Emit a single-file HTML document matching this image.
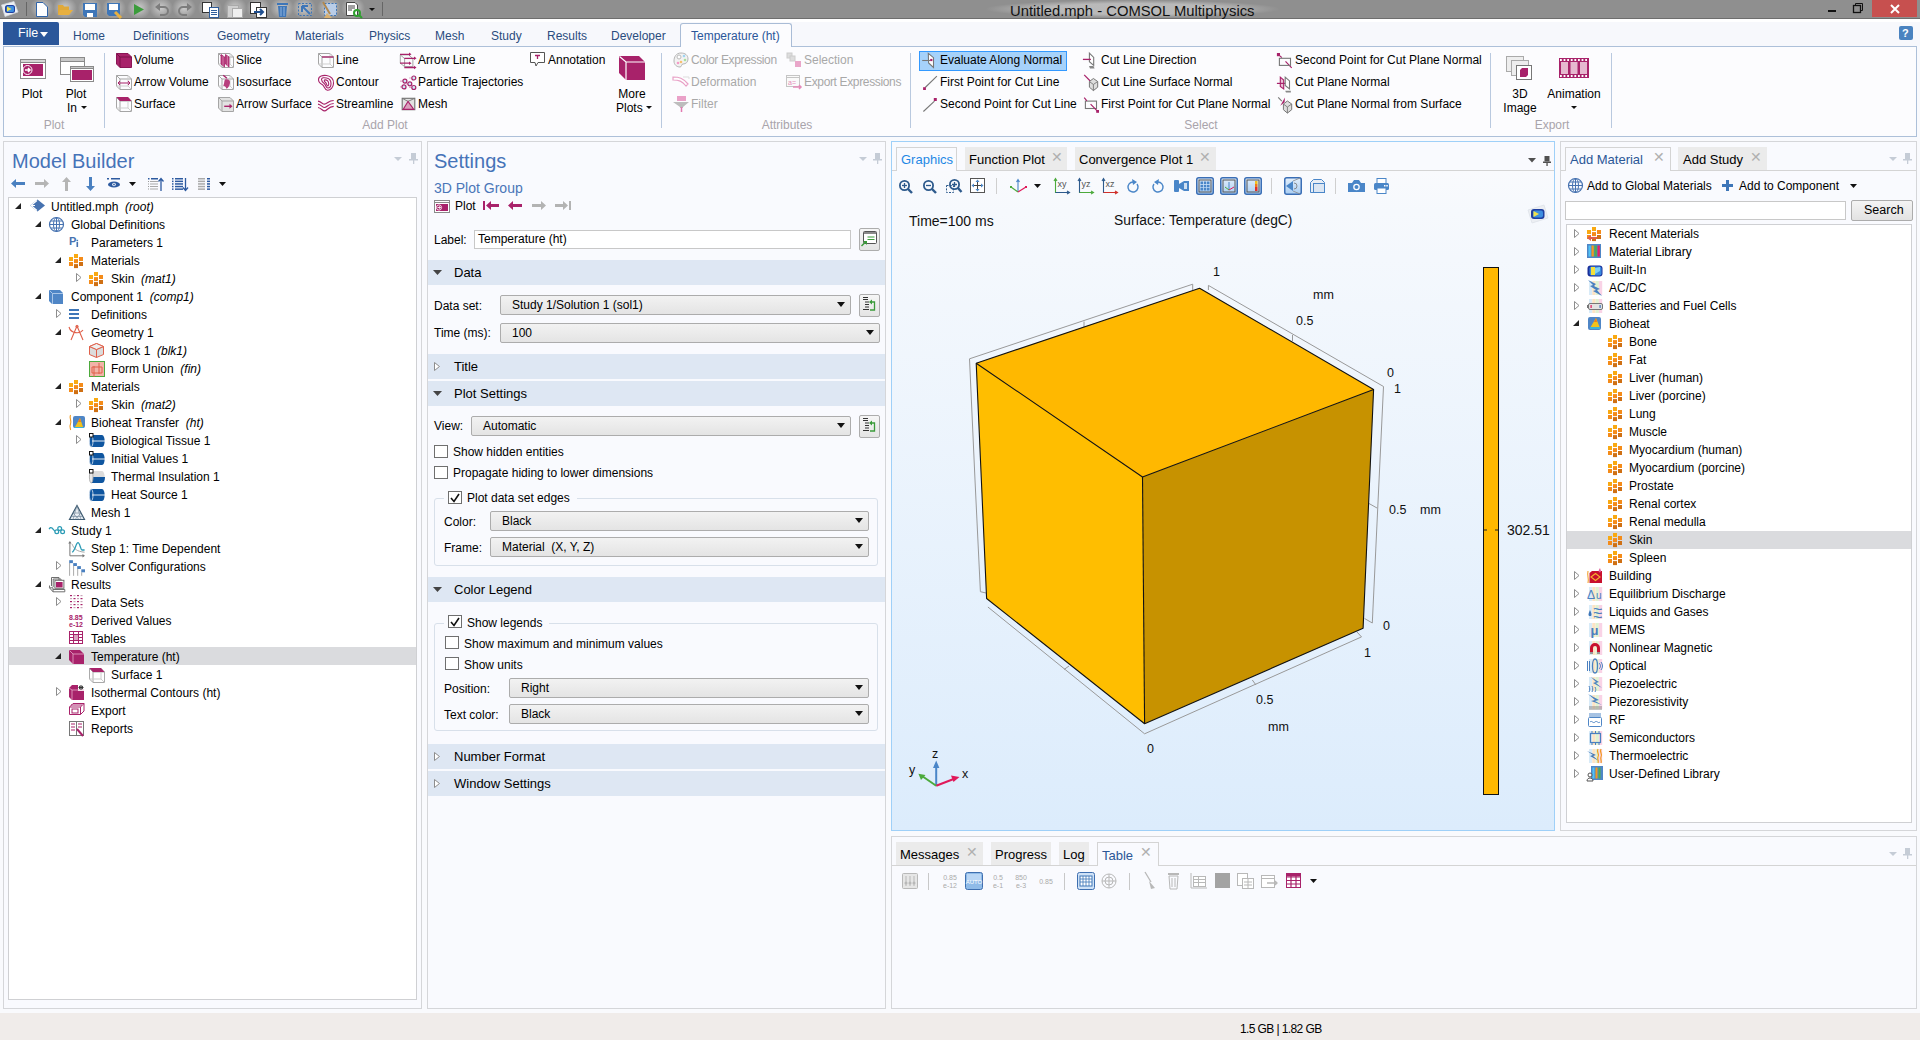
<!DOCTYPE html>
<html><head><meta charset="utf-8">
<style>
*{margin:0;padding:0;box-sizing:border-box}
html,body{width:1920px;height:1040px;overflow:hidden;background:#f9fafd;font-family:"Liberation Sans",sans-serif;font-size:12px;color:#000}
.a{position:absolute}
.t{position:absolute;white-space:nowrap;line-height:14px}
svg{position:absolute;overflow:visible}
.panel{position:absolute;background:#f9fafe;border:1px solid #d5d6d9}
.rtab{color:#2a4c7e}
.grp{color:#a9a4ab}
.dis{color:#a8a8a8}
.cb{background:linear-gradient(#f2f2f2,#e4e4e4);border:1px solid #acacac;border-radius:2px}
.gl{font-size:12.5px;color:#111}
</style></head><body>
<div class="a" style="left:0;top:0;width:1920px;height:18px;background:#8f8f8f"></div>
<div class="a" style="left:0;top:18px;width:1920px;height:1px;background:#6e6e6e"></div>
<div class="a" style="left:985px;top:0;width:295px;height:18px;background:radial-gradient(closest-side,rgba(190,190,190,0.9) 60%,rgba(143,143,143,0) 100%)"></div>
<div class="t" style="left:1010px;top:3px;font-size:14.8px;line-height:16px;color:#111">Untitled.mph - COMSOL Multiphysics</div>
<div class="a" style="left:1872px;top:0;width:45px;height:17px;background:#c7504f"></div>
<svg style="left:1888px;top:4px" width="14" height="10" viewBox="0 0 14 10"><path d="M3,1 L11,9 M11,1 L3,9" stroke="#fff" stroke-width="2"/></svg>
<div class="a" style="left:1828px;top:10px;width:8px;height:2px;background:#111"></div>
<svg style="left:1852px;top:2px" width="12" height="12" viewBox="0 0 12 12"><rect x="1.5" y="3.5" width="7" height="7" fill="none" stroke="#111" stroke-width="1.3"/><path d="M3.5,3.5 V1.5 H10.5 V8.5 H8.5" fill="none" stroke="#111" stroke-width="1"/></svg>
<div class="a" style="left:30px;top:-3px;width:24px;height:22px;background:radial-gradient(closest-side,rgba(215,215,215,0.85),rgba(143,143,143,0))"></div>
<div class="a" style="left:53px;top:-3px;width:24px;height:22px;background:radial-gradient(closest-side,rgba(215,215,215,0.85),rgba(143,143,143,0))"></div>
<div class="a" style="left:78px;top:-3px;width:24px;height:22px;background:radial-gradient(closest-side,rgba(215,215,215,0.85),rgba(143,143,143,0))"></div>
<div class="a" style="left:102px;top:-3px;width:24px;height:22px;background:radial-gradient(closest-side,rgba(215,215,215,0.85),rgba(143,143,143,0))"></div>
<div class="a" style="left:127px;top:-3px;width:24px;height:22px;background:radial-gradient(closest-side,rgba(215,215,215,0.85),rgba(143,143,143,0))"></div>
<div class="a" style="left:149px;top:-3px;width:24px;height:22px;background:radial-gradient(closest-side,rgba(215,215,215,0.85),rgba(143,143,143,0))"></div>
<div class="a" style="left:172px;top:-3px;width:24px;height:22px;background:radial-gradient(closest-side,rgba(215,215,215,0.85),rgba(143,143,143,0))"></div>
<div class="a" style="left:198px;top:-3px;width:24px;height:22px;background:radial-gradient(closest-side,rgba(215,215,215,0.85),rgba(143,143,143,0))"></div>
<div class="a" style="left:223px;top:-3px;width:24px;height:22px;background:radial-gradient(closest-side,rgba(215,215,215,0.85),rgba(143,143,143,0))"></div>
<div class="a" style="left:246px;top:-3px;width:24px;height:22px;background:radial-gradient(closest-side,rgba(215,215,215,0.85),rgba(143,143,143,0))"></div>
<div class="a" style="left:270px;top:-3px;width:24px;height:22px;background:radial-gradient(closest-side,rgba(215,215,215,0.85),rgba(143,143,143,0))"></div>
<div class="a" style="left:292px;top:-3px;width:24px;height:22px;background:radial-gradient(closest-side,rgba(215,215,215,0.85),rgba(143,143,143,0))"></div>
<div class="a" style="left:317px;top:-3px;width:24px;height:22px;background:radial-gradient(closest-side,rgba(215,215,215,0.85),rgba(143,143,143,0))"></div>
<div class="a" style="left:341px;top:-3px;width:24px;height:22px;background:radial-gradient(closest-side,rgba(215,215,215,0.85),rgba(143,143,143,0))"></div>
<svg style="left:1px;top:1px" width="18" height="16" viewBox="0 0 18 16"><path d="M0.5,4 L13,0.5 L17,11 L4,15.5z" fill="#eceff3" stroke="#d0d4da" stroke-width="0.8"/><rect x="4" y="4" width="10" height="8" rx="2.5" fill="#1f3fa0"/><rect x="5.5" y="5" width="7.5" height="6" rx="1.5" fill="#3d8ee0"/><path d="M6,5.5 L10.5,8 L6,10.5z" fill="#f2e14a"/></svg>
<div class="a" style="left:26px;top:2px;width:1px;height:14px;background:#666"></div>
<svg style="left:36px;top:2px" width="12" height="15" viewBox="0 0 12 15"><path d="M0.5,0.5 H7 L11.5,5 V14.5 H0.5z" fill="#fff" stroke="#2f63a8"/></svg>
<svg style="left:57px;top:4px" width="17" height="12" viewBox="0 0 17 12"><path d="M1,1 H6 L7,2.5 H12 V6 H4 L1,11z" fill="#e0a93a"/><path d="M3,6 H16 L12,11 H1z" fill="#e8b040"/></svg>
<svg style="left:83px;top:3px" width="14" height="14" viewBox="0 0 14 14"><path d="M0,0 H14 V14 H2 L0,12z" fill="#3e76b8"/><rect x="2" y="1" width="10" height="6" fill="#fff"/><rect x="4" y="10" width="6" height="4" fill="#fff"/></svg>
<svg style="left:107px;top:3px" width="15" height="15" viewBox="0 0 15 15"><path d="M0,0 H13 V13 H2 L0,11z" fill="#3e76b8"/><rect x="2" y="1" width="9" height="6" fill="#fff"/><path d="M8,9 L14,15" stroke="#e8b040" stroke-width="3"/></svg>
<svg style="left:134px;top:4px" width="10" height="11" viewBox="0 0 10 11"><path d="M0,0 L10,5.5 L0,11z" fill="#3b9c3b"/></svg>
<svg style="left:155px;top:3px" width="14" height="13" viewBox="0 0 14 13"><path d="M4,4 H9 A4,4 0 0 1 9,12 H5" fill="none" stroke="#7d7d7d" stroke-width="2"/><path d="M0,4 L5,0 V8z" fill="#7d7d7d"/></svg>
<svg style="left:178px;top:3px" width="14" height="13" viewBox="0 0 14 13"><path d="M10,4 H5 A4,4 0 0 0 5,12 H9" fill="none" stroke="#7d7d7d" stroke-width="2"/><path d="M14,4 L9,0 V8z" fill="#7d7d7d"/></svg>
<svg style="left:202px;top:2px" width="17" height="16" viewBox="0 0 17 16"><rect x="0.5" y="0.5" width="9" height="10" fill="#fff" stroke="#333"/><rect x="7.5" y="5.5" width="9" height="10" fill="#fff" stroke="#2f5d9a"/><path d="M9,8.5 H15 M9,10.5 H15 M9,12.5 H15" stroke="#2f5d9a"/></svg>
<svg style="left:227px;top:2px" width="16" height="16" viewBox="0 0 16 16"><rect x="0.5" y="3.5" width="11" height="12" fill="#cfcfcf" stroke="#aaa"/><rect x="5.5" y="6.5" width="10" height="9" fill="#eee" stroke="#aaa"/></svg>
<svg style="left:250px;top:2px" width="17" height="16" viewBox="0 0 17 16"><rect x="0.5" y="0.5" width="10" height="11" fill="#fff" stroke="#333"/><rect x="6.5" y="5.5" width="10" height="10" fill="#fff" stroke="#333"/><path d="M4,10 H13 M10,7 L13,10 L10,13" stroke="#1f4f90" stroke-width="2" fill="none"/></svg>
<svg style="left:277px;top:2px" width="11" height="15" viewBox="0 0 11 15"><rect x="0" y="1" width="11" height="2" fill="#3e76b8"/><path d="M1,4 H10 L9,15 H2z" fill="#3e76b8"/><path d="M4,5 V14 M7,5 V14" stroke="#8fb4e0"/></svg>
<svg style="left:298px;top:3px" width="14" height="13" viewBox="0 0 14 13"><rect x="0.5" y="0.5" width="13" height="12" fill="none" stroke="#3e76b8" stroke-dasharray="2,1.5"/><path d="M4,3 L12,11 M4,3 L4,9 M4,3 L10,3" stroke="#3e76b8" stroke-width="2"/></svg>
<svg style="left:322px;top:2px" width="15" height="16" viewBox="0 0 15 16"><rect x="2.5" y="1.5" width="12" height="12" fill="#b9cde8" stroke="#3e76b8" stroke-dasharray="2,1.5"/><path d="M1,0 L8,12" stroke="#b08850" stroke-width="2"/><path d="M5,11 L10,16 L2,16z" fill="#d8b070"/></svg>
<svg style="left:346px;top:2px" width="16" height="16" viewBox="0 0 16 16"><path d="M0.5,0.5 H9 L11.5,3 V13.5 H0.5z" fill="#fff" stroke="#444"/><path d="M2,4 H9 M2,6 H9 M2,8 H6" stroke="#444"/><circle cx="11" cy="11" r="3" fill="none" stroke="#2fa02f" stroke-width="2"/><path d="M13,13 L16,16" stroke="#2fa02f" stroke-width="2"/></svg>
<svg style="left:369px;top:8px" width="6" height="4" viewBox="0 0 6 4"><path d="M0,0 H6 L3,3z" fill="#111"/></svg>
<div class="a" style="left:382px;top:2px;width:1px;height:14px;background:#666"></div>
<div class="a" style="left:0;top:19px;width:1920px;height:3px;background:#fff"></div>
<div class="a" style="left:0;top:22px;width:1920px;height:24px;background:#f7f8fc"></div>
<div class="a" style="left:3px;top:22px;width:56px;height:23px;background:#2b579a;border-top-right-radius:2px"></div>
<div class="t" style="left:18px;top:26px;font-size:12.5px;color:#fff">File</div>
<svg style="left:40px;top:32px" width="8" height="5" viewBox="0 0 8 5"><path d="M0,0 H8 L4,5z" fill="#fff"/></svg>
<div class="t rtab" style="left:73px;top:29px;font-size:12px;">Home</div>
<div class="t rtab" style="left:133px;top:29px;font-size:12px;">Definitions</div>
<div class="t rtab" style="left:217px;top:29px;font-size:12px;">Geometry</div>
<div class="t rtab" style="left:295px;top:29px;font-size:12px;">Materials</div>
<div class="t rtab" style="left:369px;top:29px;font-size:12px;">Physics</div>
<div class="t rtab" style="left:435px;top:29px;font-size:12px;">Mesh</div>
<div class="t rtab" style="left:491px;top:29px;font-size:12px;">Study</div>
<div class="t rtab" style="left:547px;top:29px;font-size:12px;">Results</div>
<div class="t rtab" style="left:611px;top:29px;font-size:12px;">Developer</div>
<div class="a" style="left:680px;top:23px;width:112px;height:24px;background:#fcfcfe;border:1px solid #a9bcd6;border-bottom:none;border-radius:3px 3px 0 0;z-index:2"></div>
<div class="t " style="left:691px;top:29px;font-size:12px;color:#2b579a;z-index:3">Temperature (ht)</div>
<div class="a" style="left:1899px;top:26px;width:14px;height:14px;background:#4a83c0;border-radius:2px"></div>
<div class="t" style="left:1902px;top:26px;font-size:11px;font-weight:bold;color:#fff">?</div>
<div class="a" style="left:3px;top:46px;width:1914px;height:91px;background:#fcfcfe;border:1px solid #adc0d9"></div>
<div class="a" style="left:104px;top:53px;width:1px;height:75px;background:#b9c9df"></div>
<div class="a" style="left:661px;top:53px;width:1px;height:75px;background:#b9c9df"></div>
<div class="a" style="left:910px;top:53px;width:1px;height:75px;background:#b9c9df"></div>
<div class="a" style="left:1490px;top:53px;width:1px;height:75px;background:#b9c9df"></div>
<div class="a" style="left:1611px;top:53px;width:1px;height:75px;background:#b9c9df"></div>
<div class="t grp" style="left:-6px;width:120px;text-align:center;top:118px;font-size:12px">Plot</div>
<div class="t grp" style="left:325px;width:120px;text-align:center;top:118px;font-size:12px">Add Plot</div>
<div class="t grp" style="left:727px;width:120px;text-align:center;top:118px;font-size:12px">Attributes</div>
<div class="t grp" style="left:1141px;width:120px;text-align:center;top:118px;font-size:12px">Select</div>
<div class="t grp" style="left:1492px;width:120px;text-align:center;top:118px;font-size:12px">Export</div>
<svg style="left:20px;top:59px" width="26" height="20" viewBox="0 0 26 20"><rect x="0.5" y="0.5" width="25" height="19" fill="#fff" stroke="#8a8a8a"/><rect x="0.5" y="0.5" width="25" height="3" fill="#d6d6d6" stroke="#8a8a8a"/><rect x="3" y="5" width="20" height="12" fill="#a8226a"/><circle cx="7.5" cy="11" r="4.5" fill="#a8226a" stroke="#fff" stroke-width="1"/><path d="M5,11 H10 M8,9 L10,11 L8,13" stroke="#fff" stroke-width="1.5" fill="none"/></svg>
<div class="t" style="left:2px;width:60px;text-align:center;top:87px">Plot</div>
<svg style="left:60px;top:57px" width="34" height="25" viewBox="0 0 34 25"><rect x="0.5" y="0.5" width="24" height="17" fill="#fff" stroke="#8a8a8a"/><rect x="0.5" y="0.5" width="24" height="4" fill="#c8c8c8" stroke="#8a8a8a"/><rect x="10.5" y="9.5" width="23" height="15" fill="#fff" stroke="#8a8a8a"/><rect x="10.5" y="9.5" width="23" height="2" fill="#c8c8c8" stroke="#8a8a8a"/><rect x="12" y="13" width="20" height="10" fill="#a8226a"/></svg>
<div class="t" style="left:46px;width:60px;text-align:center;top:87px">Plot</div>
<div class="t" style="left:67px;top:101px">In</div>
<svg style="left:81px;top:106px" width="6" height="4" viewBox="0 0 6 4"><path d="M0,0 H6 L3,3z" fill="#111"/></svg>
<svg style="left:116px;top:52px" width="16" height="16" viewBox="0 0 16 16"><path d="M0.5,1.5 H12 L15.5,5 V15.5 H4 L0.5,12z" fill="#a8226a" stroke="#8a1555"/><path d="M0.5,1.5 L4,5 H15.5 M4,5 V15.5" stroke="#7a1048" fill="none"/></svg>
<div class="t " style="left:134px;top:53px;font-size:12px;">Volume</div>
<svg style="left:116px;top:74px" width="16" height="16" viewBox="0 0 16 16"><g fill="none" stroke="#a5a5a5" stroke-width="1"><path d="M0.5,1.5 H12 L15.5,5 V15.5 H4 L0.5,12z M0.5,1.5 L4,5 H15.5 M4,5 V15.5"/><path d="M12,1.5 V12 H0.5 M12,12 L15.5,15.5" stroke="#cfcfcf"/></g><path d="M2,9 H14 M4,7 L2,9 L4,11 M12,7 L14,9 L12,11" stroke="#a8226a" fill="none"/></svg>
<div class="t " style="left:134px;top:75px;font-size:12px;">Arrow Volume</div>
<svg style="left:116px;top:96px" width="16" height="16" viewBox="0 0 16 16"><g fill="none" stroke="#a5a5a5" stroke-width="1"><path d="M0.5,1.5 H12 L15.5,5 V15.5 H4 L0.5,12z M0.5,1.5 L4,5 H15.5 M4,5 V15.5"/><path d="M12,1.5 V12 H0.5 M12,12 L15.5,15.5" stroke="#cfcfcf"/></g><path d="M0.5,1 H12 L15.5,5 H4z" fill="#a8226a"/></svg>
<div class="t " style="left:134px;top:97px;font-size:12px;">Surface</div>
<svg style="left:218px;top:52px" width="16" height="16" viewBox="0 0 16 16"><g fill="none" stroke="#a5a5a5" stroke-width="1"><path d="M0.5,1.5 H12 L15.5,5 V15.5 H4 L0.5,12z M0.5,1.5 L4,5 H15.5 M4,5 V15.5"/><path d="M12,1.5 V12 H0.5 M12,12 L15.5,15.5" stroke="#cfcfcf"/></g><path d="M3,2.5 L6.5,5 V15 L3,12z M7.5,2.5 L11,5 V15 L7.5,12z" fill="#b8407e" stroke="#a8226a" stroke-width="0.8"/><path d="M5,4 V14 M9.5,4 V14" stroke="#d98ab3" stroke-width="0.7"/></svg>
<div class="t " style="left:236px;top:53px;font-size:12px;">Slice</div>
<svg style="left:218px;top:74px" width="16" height="16" viewBox="0 0 16 16"><g fill="none" stroke="#a5a5a5" stroke-width="1"><path d="M0.5,1.5 H12 L15.5,5 V15.5 H4 L0.5,12z M0.5,1.5 L4,5 H15.5 M4,5 V15.5"/><path d="M12,1.5 V12 H0.5 M12,12 L15.5,15.5" stroke="#cfcfcf"/></g><path d="M5.2,1.2 L8.9,4.3" stroke="#a8226a" stroke-width="1.4"/><path d="M7,5.5 C10,4.5 12.5,6 12,9 C11.5,12 10,14 8.5,14.8 C8,12.5 6.5,12 5.2,11.5 C6.5,10 6,7 7,5.5z" fill="#b8407e"/></svg>
<div class="t " style="left:236px;top:75px;font-size:12px;">Isosurface</div>
<svg style="left:218px;top:96px" width="16" height="16" viewBox="0 0 16 16"><path d="M0.5,1.5 H12 L15.5,5 V15.5 H4 L0.5,12z" fill="#e2e2e2" stroke="#a5a5a5"/><path d="M0.5,1.5 L4,5 H15.5 M4,5 V15.5" stroke="#a5a5a5" fill="none"/><path d="M6.2,10.3 H12.5" stroke="#a8226a" stroke-width="1.4"/><path d="M11.5,7.8 L14.5,10.3 L11.5,12.8z" fill="#a8226a"/></svg>
<div class="t " style="left:236px;top:97px;font-size:12px;">Arrow Surface</div>
<svg style="left:318px;top:52px" width="16" height="16" viewBox="0 0 16 16"><g fill="none" stroke="#a5a5a5" stroke-width="1"><path d="M0.5,1.5 H12 L15.5,5 V15.5 H4 L0.5,12z M0.5,1.5 L4,5 H15.5 M4,5 V15.5"/><path d="M12,1.5 V12 H0.5 M12,12 L15.5,15.5" stroke="#cfcfcf"/></g><path d="M4,5 H15.5" stroke="#a8226a" stroke-width="1.3"/></svg>
<div class="t " style="left:336px;top:53px;font-size:12px;">Line</div>
<svg style="left:318px;top:74px" width="16" height="16" viewBox="0 0 16 16"><g fill="none" stroke="#a8226a" stroke-width="1.1"><path d="M0.5,5.5 C0.5,2 5,1 8.5,1.5 C13,2.2 15.7,5 15.5,9.5 C15.3,13.5 12.5,16.5 9.5,16.3 C6.5,16 6.5,12 4.5,10.8 C2.5,9.8 0.5,8.8 0.5,5.5z"/><path d="M3.5,5.5 C3.5,3.5 6,3.5 8.5,4 C11.5,4.6 13,6.5 13,9.5 C13,12.5 11.5,14 9.8,14 C8,14 8,11 6.5,9.8 C5,8.6 3.5,7.5 3.5,5.5z"/><path d="M6.5,6 C8.5,5.5 10.5,6.8 10.7,9.5 C10.9,11.5 10,12 9.5,11.8 C8.5,11.5 8.8,9.5 7.5,8.5 C6.5,7.8 6,6.5 6.5,6z"/></g></svg>
<div class="t " style="left:336px;top:75px;font-size:12px;">Contour</div>
<svg style="left:318px;top:96px" width="16" height="16" viewBox="0 0 16 16"><g fill="none" stroke="#a8226a" stroke-width="1.2"><path d="M0,5.1 C3,5.5 4.5,8.2 6.5,8.2 C9,8.2 10.5,4.5 15.7,4.5"/><path d="M0,8.2 C3,8.6 4.5,11.5 6.5,11.5 C9,11.5 10.5,7.5 15.7,7.5"/><path d="M0,11.5 C3,11.9 4.5,14.9 6.5,14.9 C9,14.9 10.5,10.3 15.7,10.3"/></g></svg>
<div class="t " style="left:336px;top:97px;font-size:12px;">Streamline</div>
<svg style="left:400px;top:52px" width="16" height="16" viewBox="0 0 16 16"><g fill="none" stroke="#a5a5a5"><path d="M0.3,2.9 H8.6 L12.9,6.6 V14.6 H4.6 L0.3,11.2z M0.3,2.9 L4.6,6.6 H12.9 M4.6,6.6 V14.6"/></g><g stroke="#a8226a" stroke-width="1.3"><path d="M0,2.3 H9.5 M4.3,6.3 H14.5 M0,11.2 H9.5 M4.3,15.5 H14.5"/></g><g fill="#a8226a"><path d="M9,0.5 L11.5,2.3 L9,4.1z M14,4.5 L16.5,6.3 L14,8.1z M9,9.4 L11.5,11.2 L9,13z M14,13.7 L16.5,15.5 L14,17.3z"/></g></svg>
<div class="t " style="left:418px;top:53px;font-size:12px;">Arrow Line</div>
<svg style="left:400px;top:74px" width="16" height="16" viewBox="0 0 16 16"><g stroke="#e3a9c7" stroke-width="1.2"><path d="M9,4 H11 M0,7.1 H2.5 M6,9.8 H7.5 M0,12.9 H1.7 M9,13.5 H11"/></g><g fill="#cfe8f5" stroke="#a8226a" stroke-width="1.2"><circle cx="13.8" cy="4" r="2"/><circle cx="4.9" cy="7.1" r="2"/><circle cx="9.8" cy="9.8" r="2"/><circle cx="4" cy="12.9" r="2"/><circle cx="13.8" cy="13.5" r="2"/></g></svg>
<div class="t " style="left:418px;top:75px;font-size:12px;">Particle Trajectories</div>
<svg style="left:400px;top:96px" width="16" height="16" viewBox="0 0 16 16"><rect x="2.2" y="2.3" width="12.6" height="11.4" fill="#e2e2e2" stroke="#6f6f6f" stroke-width="1.1"/><path d="M2.2,2.3 L8,5.4 L14.8,2.3" stroke="#777" fill="none" stroke-width="0.9"/><path d="M8,5.4 L13.8,13.4 H3.1z" fill="#d9a0bd" stroke="#a8226a" stroke-width="1.1"/></svg>
<div class="t " style="left:418px;top:97px;font-size:12px;">Mesh</div>
<svg style="left:530px;top:52px" width="16" height="16" viewBox="0 0 16 16"><path d="M0.5,0.5 H14.5 V10.5 H8 L6,14 L5,10.5 H0.5z" fill="#fff" stroke="#555"/><path d="M5,3.5 H10 M7.5,3.5 V7" stroke="#a8226a" stroke-width="1.3"/></svg>
<div class="t " style="left:548px;top:53px;font-size:12px;">Annotation</div>
<svg style="left:619px;top:56px" width="28" height="25" viewBox="0 0 28 25"><path d="M0,0 H20 L26,6 V24 H7 L0,17z" fill="#a8226a"/><path d="M0.5,0.5 L7,6 H26 M7,6 V24" stroke="#fff" stroke-width="1.2" fill="none"/></svg>
<div class="t" style="left:602px;width:60px;text-align:center;top:87px">More</div>
<div class="t" style="left:616px;top:101px">Plots</div>
<svg style="left:646px;top:106px" width="6" height="4" viewBox="0 0 6 4"><path d="M0,0 H6 L3,3z" fill="#111"/></svg>
<svg style="left:673px;top:52px" width="16" height="16" viewBox="0 0 16 16"><path d="M8,1 C3,1 1,5 1,9 C1,13 4,15 7,15 C9,15 8,12 10,12 C13,12 15,10 15,7 C15,3 12,1 8,1z" fill="#f2f2f2" stroke="#b5b5b5"/><circle cx="5" cy="11" r="1.3" fill="#f59ac8"/><circle cx="8" cy="10" r="1.3" fill="#f7c070"/><circle cx="12" cy="8" r="1.3" fill="#a8e09a"/><circle cx="11" cy="4" r="1.3" fill="#9fd4f2"/><circle cx="6" cy="5" r="2" fill="#fff" stroke="#bbb"/></svg>
<div class="t dis" style="left:691px;top:53px;font-size:12px;letter-spacing:-0.35px">Color Expression</div>
<svg style="left:673px;top:74px" width="16" height="16" viewBox="0 0 16 16"><path d="M0,3 C6,3 10,4 15,10 L13,12 C9,7 6,6 0,6z" fill="#fff" stroke="#e8a0c6" stroke-width="1.2"/><path d="M10,3 H16 V5" stroke="#ddd" fill="none"/></svg>
<div class="t dis" style="left:691px;top:75px;font-size:12px;">Deformation</div>
<svg style="left:673px;top:96px" width="16" height="16" viewBox="0 0 16 16"><rect x="4" y="0" width="9" height="5" fill="#eaa1c8"/><path d="M0,6 H16 L10,11 V12 H7 V11z" fill="#bdbdbd"/><path d="M8.5,11 V16" stroke="#e37ab0" stroke-width="1.5"/></svg>
<div class="t dis" style="left:691px;top:97px;font-size:12px;">Filter</div>
<svg style="left:786px;top:52px" width="16" height="16" viewBox="0 0 16 16"><rect x="1" y="1" width="5" height="5" fill="#ddd" stroke="#ccc"/><rect x="4" y="4" width="5" height="5" fill="#ddd" stroke="#ccc"/><rect x="9" y="9" width="6" height="6" fill="#e9a6c9"/></svg>
<div class="t dis" style="left:804px;top:53px;font-size:12px;">Selection</div>
<svg style="left:786px;top:74px" width="16" height="16" viewBox="0 0 16 16"><rect x="0.5" y="1.5" width="13" height="11" fill="#fafafa" stroke="#c5c5c5"/><path d="M0.5,3.5 H13.5" stroke="#c5c5c5"/><text x="2" y="11" font-size="7" fill="#e48ab8" font-family="Liberation Sans">a=</text><path d="M7,13 H15 M13,11 L15,13 L13,15" stroke="#e48ab8" stroke-width="1.5" fill="none"/></svg>
<div class="t dis" style="left:804px;top:75px;font-size:12px;letter-spacing:-0.35px">Export Expressions</div>
<div class="a" style="left:919px;top:51px;width:148px;height:20px;background:#a6d2fa;border:1px solid #3399ff"></div>
<svg style="left:922px;top:52px" width="16" height="16" viewBox="0 0 16 16"><path d="M6.3,1.4 L11.5,5.7 V15.5 L6.6,10.9z" fill="#fff" stroke="#777" stroke-width="1.1"/><path d="M0.2,8.5 H8.5" stroke="#777" stroke-width="1.1"/><rect x="8.2" y="6.9" width="2.2" height="2.2" fill="#a8226a"/></svg>
<div class="t " style="left:940px;top:53px;font-size:12px;">Evaluate Along Normal</div>
<svg style="left:922px;top:74px" width="16" height="16" viewBox="0 0 16 16"><path d="M14.9,2.2 L3.2,13.5" stroke="#777" stroke-width="1.1"/><rect x="1.1" y="13.2" width="2.8" height="2.8" fill="#a8226a"/></svg>
<div class="t " style="left:940px;top:75px;font-size:12px;">First Point for Cut Line</div>
<svg style="left:922px;top:96px" width="16" height="16" viewBox="0 0 16 16"><path d="M1.4,15.5 L12.5,5.1" stroke="#777" stroke-width="1.1"/><rect x="11.8" y="2" width="3" height="3" fill="#a8226a"/></svg>
<div class="t " style="left:940px;top:97px;font-size:12px;">Second Point for Cut Line</div>
<svg style="left:1083px;top:52px" width="16" height="16" viewBox="0 0 16 16"><path d="M6.4,1.1 L10.7,5.4 V13.4 L6.4,9.7z" fill="#fff" stroke="#777" stroke-width="1.1"/><path d="M-0.1,7.4 H7.9" stroke="#a8226a" stroke-width="1.3"/><path d="M6,14 H10.5 L11.6,16.5 H7z" fill="#888"/></svg>
<div class="t " style="left:1101px;top:53px;font-size:12px;">Cut Line Direction</div>
<svg style="left:1083px;top:74px" width="16" height="16" viewBox="0 0 16 16"><path d="M1.2,0.9 L8.2,8" stroke="#a8226a" stroke-width="1.2"/><path d="M10.4,4.5 L14.7,7.5 V13.2 L10.4,16.6 L6.4,13.2 V7.5z" fill="#dedede" stroke="#777" stroke-width="1"/><path d="M6.4,7.5 L10.4,10.5 L14.7,7.5 M10.4,10.5 V16.6" stroke="#777" stroke-width="0.9" fill="none"/></svg>
<div class="t " style="left:1101px;top:75px;font-size:12px;">Cut Line Surface Normal</div>
<svg style="left:1083px;top:96px" width="16" height="16" viewBox="0 0 16 16"><rect x="2.4" y="5.1" width="11.1" height="7.4" fill="none" stroke="#777" stroke-width="1.1"/><path d="M1.2,1.7 L3.9,4.8 M7.6,8.2 L14.4,15.2" stroke="#a8226a" stroke-width="1.2"/><rect x="13.2" y="14" width="2.8" height="2.8" fill="#a8226a"/></svg>
<div class="t " style="left:1101px;top:97px;font-size:12px;">First Point for Cut Plane Normal</div>
<svg style="left:1277px;top:52px" width="16" height="16" viewBox="0 0 16 16"><rect x="-0.1" y="1" width="3.1" height="3.2" fill="#a8226a"/><path d="M3,3.8 L4.8,5.7 M8.5,9.4 L14.7,15.8" stroke="#a8226a" stroke-width="1.2"/><rect x="2.4" y="6.3" width="11.1" height="7.1" fill="none" stroke="#777" stroke-width="1.1"/></svg>
<div class="t " style="left:1295px;top:53px;font-size:12px;">Second Point for Cut Plane Normal</div>
<svg style="left:1277px;top:74px" width="16" height="16" viewBox="0 0 16 16"><path d="M3.3,3.2 L6.7,6 V14.9 L3.3,12.5z" fill="#ebc1d6" stroke="#a8226a" stroke-width="1.1"/><path d="M-0.1,9.4 H9.8" stroke="#a8226a" stroke-width="1.2"/><path d="M8.2,3.2 L12.5,6.9 V14.9 L8.2,11.5z" fill="#fff" stroke="#777" stroke-width="1.1"/><path d="M8.2,16.8 H13.8 V18.6 H9z" fill="#888"/></svg>
<div class="t " style="left:1295px;top:75px;font-size:12px;">Cut Plane Normal</div>
<svg style="left:1277px;top:96px" width="16" height="16" viewBox="0 0 16 16"><path d="M1.2,1.4 L4.8,5.1" stroke="#777" stroke-width="1.1"/><path d="M3.3,9.7 L7.9,1.4 L7.6,6.3z" fill="#a8226a"/><path d="M10.4,5.0 L14.7,8.0 V13.7 L10.4,17.1 L6.4,13.7 V8.0z" fill="#dedede" stroke="#777" stroke-width="1"/><path d="M6.4,8.0 L10.4,11.0 L14.7,8.0 M10.4,11.0 V17.1" stroke="#777" stroke-width="0.9" fill="none"/></svg>
<div class="t " style="left:1295px;top:97px;font-size:12px;">Cut Plane Normal from Surface</div>
<svg style="left:1506px;top:56px" width="31" height="25" viewBox="0 0 31 25"><rect x="0.5" y="0.5" width="17" height="15" fill="#eee" stroke="#aaa"/><rect x="5.5" y="4.5" width="17" height="15" fill="#eee" stroke="#aaa"/><rect x="10.5" y="9.5" width="15" height="14" fill="#fff" stroke="#777"/><path d="M14,14 L16,12 H22 V19 L20,21 H14z" fill="#a8226a"/></svg>
<div class="t" style="left:1490px;width:60px;text-align:center;top:87px">3D</div>
<div class="t" style="left:1490px;width:60px;text-align:center;top:101px">Image</div>
<svg style="left:1559px;top:58px" width="30" height="20" viewBox="0 0 30 20"><rect x="0" y="0" width="30" height="20" fill="#a8226a"/><rect x="2" y="4" width="7" height="12" fill="#e6b8cf"/><rect x="11.5" y="4" width="7" height="12" fill="#e6b8cf"/><rect x="21" y="4" width="7" height="12" fill="#e6b8cf"/><rect x="1.0" y="1" width="1.8" height="2" fill="#fff"/><rect x="1.0" y="17" width="1.8" height="2" fill="#fff"/><rect x="4.6" y="1" width="1.8" height="2" fill="#fff"/><rect x="4.6" y="17" width="1.8" height="2" fill="#fff"/><rect x="8.2" y="1" width="1.8" height="2" fill="#fff"/><rect x="8.2" y="17" width="1.8" height="2" fill="#fff"/><rect x="11.8" y="1" width="1.8" height="2" fill="#fff"/><rect x="11.8" y="17" width="1.8" height="2" fill="#fff"/><rect x="15.4" y="1" width="1.8" height="2" fill="#fff"/><rect x="15.4" y="17" width="1.8" height="2" fill="#fff"/><rect x="19.0" y="1" width="1.8" height="2" fill="#fff"/><rect x="19.0" y="17" width="1.8" height="2" fill="#fff"/><rect x="22.6" y="1" width="1.8" height="2" fill="#fff"/><rect x="22.6" y="17" width="1.8" height="2" fill="#fff"/><rect x="26.2" y="1" width="1.8" height="2" fill="#fff"/><rect x="26.2" y="17" width="1.8" height="2" fill="#fff"/></svg>
<div class="t" style="left:1524px;width:100px;text-align:center;top:87px">Animation</div>
<svg style="left:1571px;top:106px" width="6" height="4" viewBox="0 0 6 4"><path d="M0,0 H6 L3,3z" fill="#111"/></svg>
<div class="panel" style="left:3px;top:141px;width:419px;height:868px"></div>
<div class="panel" style="left:427px;top:141px;width:459px;height:868px"></div>
<div class="panel" style="left:891px;top:141px;width:664px;height:690px;border-color:#9fd0f8"></div>
<div class="panel" style="left:1560px;top:141px;width:357px;height:690px"></div>
<div class="panel" style="left:891px;top:836px;width:1026px;height:173px"></div>
<div class="a" style="left:0;top:1013px;width:1920px;height:27px;background:#f0ecea"></div>
<!-- GRAPHICS PANEL -->
<div class="a" style="left:892px;top:171px;width:662px;height:659px;background:linear-gradient(#f9fafd 0px,#f6f9fd 40px,#dcecfc 659px)"></div>
<div class="a" style="left:892px;top:170px;width:662px;height:1px;background:#d4d4d4"></div>
<div class="a" style="left:896px;top:147px;width:61px;height:24px;border:1px solid #d4d4d4;border-bottom:none;background:#f9fafe"></div>
<div class="a" style="left:965px;top:147px;width:102px;height:23px;background:#ebebeb"></div>
<div class="a" style="left:1075px;top:147px;width:141px;height:23px;background:#ebebeb"></div>
<div class="t" style="left:901px;top:153px;font-size:13px;color:#1e88e5">Graphics</div>
<div class="t" style="left:969px;top:153px;font-size:13px">Function Plot</div>
<div class="t" style="left:1051px;top:150px;font-size:14px;color:#b0b0b0">&#x2715;</div>
<div class="t" style="left:1079px;top:153px;font-size:13px">Convergence Plot 1</div>
<div class="t" style="left:1199px;top:150px;font-size:14px;color:#b0b0b0">&#x2715;</div>
<svg class="a" style="left:0;top:0" width="1920" height="1040">
 <g fill="none" stroke="#999" stroke-width="1">
  <polyline points="975,480 969.5,358.8 1192.7,284.2 1192.7,290"/>
  <line x1="1084" y1="321.5" x2="1084" y2="327"/>
  <polyline points="1208.4,290 1208.4,285.4 1383.5,386.5 1372.3,623 1364.6,618.5"/>
  <line x1="1292.5" y1="335" x2="1292.5" y2="341"/>
  <line x1="1369" y1="503.5" x2="1377" y2="508"/>
  <polyline points="975,480 980.4,591.7 986,593"/>
  <polyline points="987.9,607 1144.6,733.8 1361.5,636.9 1357,632"/>
  <line x1="1064" y1="669.5" x2="1069" y2="666"/>
  <line x1="1252.3" y1="680" x2="1256" y2="685"/>
 </g>
 <polygon points="1199.6,288.2 1373.6,389.5 1142.5,477 976.2,363.2" fill="#ffb800"/>
 <polygon points="976.2,363.2 1142.5,477 1144.6,723.7 986.6,598.5" fill="#ffbe00"/>
 <polygon points="1142.5,477 1373.6,389.5 1363.1,628.3 1144.6,723.7" fill="#c79200"/>
 <g fill="none" stroke="#111" stroke-width="1.1" stroke-linejoin="round">
  <polygon points="1199.6,288.2 1373.6,389.5 1363.1,628.3 1144.6,723.7 986.6,598.5 976.2,363.2"/>
  <polyline points="976.2,363.2 1142.5,477 1373.6,389.5"/>
  <line x1="1142.5" y1="477" x2="1144.6" y2="723.7"/>
 </g>
 <rect x="1483.5" y="267.5" width="15" height="527" fill="#ffb800" stroke="#111" stroke-width="1"/>
 <line x1="1484" y1="530" x2="1487" y2="530" stroke="#222"/>
 <line x1="1495" y1="530" x2="1498" y2="530" stroke="#222"/>
 <g stroke-width="2" fill="none">
  <line x1="936.2" y1="785.8" x2="936.2" y2="765" stroke="#4a86c8"/>
  <line x1="936.2" y1="785.8" x2="955" y2="778.5" stroke="#e0195a"/>
  <line x1="936.2" y1="785.8" x2="922" y2="776" stroke="#4caa3c"/>
 </g>
 <polygon points="936.2,760.5 933,768 939.4,768" fill="#4a86c8"/>
 <polygon points="959.5,777 951,775.5 953.5,782" fill="#e0195a"/>
 <polygon points="918.4,773.8 921,780 925.5,775" fill="#4caa3c"/>
</svg>
<div class="t" style="left:909px;top:214px;font-size:14px;color:#111">Time=100 ms</div>
<div class="t" style="left:1114px;top:214px;font-size:13.8px;color:#111">Surface: Temperature (degC)</div>
<div class="t gl" style="left:1213px;top:265px">1</div>
<div class="t gl" style="left:1313px;top:288px">mm</div>
<div class="t gl" style="left:1296px;top:314px">0.5</div>
<div class="t gl" style="left:1387px;top:366px">0</div>
<div class="t gl" style="left:1394px;top:382px">1</div>
<div class="t gl" style="left:1389px;top:503px">0.5</div>
<div class="t gl" style="left:1420px;top:503px">mm</div>
<div class="t gl" style="left:1383px;top:619px">0</div>
<div class="t gl" style="left:1364px;top:646px">1</div>
<div class="t gl" style="left:1256px;top:693px">0.5</div>
<div class="t gl" style="left:1268px;top:720px">mm</div>
<div class="t gl" style="left:1147px;top:742px">0</div>
<div class="t" style="left:1507px;top:523px;font-size:14px;color:#111">302.51</div>
<div class="t gl" style="left:932px;top:747px">z</div>
<div class="t gl" style="left:909px;top:763px">y</div>
<div class="t gl" style="left:962px;top:767px">x</div>

<svg style="left:899px;top:180px" width="14" height="14" viewBox="0 0 14 14"><circle cx="5.5" cy="5.5" r="4.6" fill="none" stroke="#2d5a8c" stroke-width="1.8"/><path d="M9,9 L13,13" stroke="#2d5a8c" stroke-width="2.4"/><path d="M3,5.5 H8" stroke="#2d5a8c" stroke-width="1.3"/><path d="M5.5,3 V8" stroke="#2d5a8c" stroke-width="1.3"/></svg>
<svg style="left:923px;top:180px" width="14" height="14" viewBox="0 0 14 14"><circle cx="5.5" cy="5.5" r="4.6" fill="none" stroke="#2d5a8c" stroke-width="1.8"/><path d="M9,9 L13,13" stroke="#2d5a8c" stroke-width="2.4"/><path d="M3,5.5 H8" stroke="#2d5a8c" stroke-width="1.3"/></svg>
<svg style="left:946px;top:179px" width="16" height="15" viewBox="0 0 16 15"><rect x="0.5" y="6.5" width="7" height="7" fill="none" stroke="#2d5a8c" stroke-dasharray="2,1.3"/><circle cx="8.5" cy="5.5" r="4.6" fill="none" stroke="#2d5a8c" stroke-width="1.8"/><path d="M12,9 L15.5,13" stroke="#2d5a8c" stroke-width="2.4"/><path d="M6,5.5 H11 M8.5,3 V8" stroke="#2d5a8c" stroke-width="1.3"/></svg>
<svg style="left:970px;top:178px" width="15" height="15" viewBox="0 0 15 15"><rect x="0.5" y="0.5" width="14" height="14" fill="#fff" stroke="#555"/><path d="M7.5,4 V11 M4,7.5 H11" stroke="#444"/><path d="M7.5,1.5 L5.5,4 H9.5z M7.5,13.5 L5.5,11 H9.5z M1.5,7.5 L4,5.5 V9.5z M13.5,7.5 L11,5.5 V9.5z" fill="#4a86c8"/></svg>
<div class="a" style="left:996px;top:178px;width:1px;height:16px;background:#cfcfcf"></div>
<div class="a" style="left:1271px;top:178px;width:1px;height:16px;background:#cfcfcf"></div>
<div class="a" style="left:1335px;top:178px;width:1px;height:16px;background:#cfcfcf"></div>
<svg style="left:1010px;top:179px" width="17" height="14" viewBox="0 0 17 14"><path d="M8,13 V1 M6.5,3 L8,0.5 L9.5,3" stroke="#4a86c8" stroke-width="1.1" fill="none"/><path d="M8,13 L1,8" stroke="#4caa3c" stroke-width="1.2"/><path d="M8,13 L16,8" stroke="#e0195a" stroke-width="1.2"/><rect x="0" y="7" width="2" height="2" fill="#4caa3c"/><rect x="15" y="7" width="2" height="2" fill="#e0195a"/></svg>
<svg style="left:1034px;top:184px" width="7" height="4" viewBox="0 0 7 4"><path d="M0,0 H7 L3.5,4z" fill="#111"/></svg>
<svg style="left:1054px;top:178px" width="16" height="16" viewBox="0 0 16 16"><path d="M1.5,15 V1 M0,3 L1.5,0.5 L3,3" stroke="#4caa3c" stroke-width="1.1" fill="none"/><path d="M1.5,14.5 H15 M13,13 L15.5,14.5 L13,16" stroke="#2d5a8c" stroke-width="1.1" fill="none"/><text x="3.5" y="9" font-family="Liberation Sans" font-size="9" fill="#555">xy</text></svg>
<svg style="left:1078px;top:178px" width="16" height="16" viewBox="0 0 16 16"><path d="M1.5,15 V1 M0,3 L1.5,0.5 L3,3" stroke="#2d5a8c" stroke-width="1.1" fill="none"/><path d="M1.5,14.5 H15 M13,13 L15.5,14.5 L13,16" stroke="#4caa3c" stroke-width="1.1" fill="none"/><text x="3.5" y="9" font-family="Liberation Sans" font-size="9" fill="#555">yz</text></svg>
<svg style="left:1102px;top:178px" width="16" height="16" viewBox="0 0 16 16"><path d="M1.5,15 V1 M0,3 L1.5,0.5 L3,3" stroke="#2d5a8c" stroke-width="1.1" fill="none"/><path d="M1.5,14.5 H15 M13,13 L15.5,14.5 L13,16" stroke="#d0302a" stroke-width="1.1" fill="none"/><text x="3.5" y="9" font-family="Liberation Sans" font-size="9" fill="#555">xz</text></svg>
<svg style="left:1127px;top:179px" width="13" height="14" viewBox="0 0 13 14"><path d="M10,5 A5,5 0 1 1 6,3" fill="none" stroke="#4a86c8" stroke-width="1.4"/><path d="M5,0 L10,3 L6,6z" fill="#4a86c8"/></svg>
<svg style="left:1151px;top:179px" width="13" height="14" viewBox="0 0 13 14"><path d="M3,5 A5,5 0 1 0 7,3" fill="none" stroke="#4a86c8" stroke-width="1.4"/><path d="M8,0 L3,3 L7,6z" fill="#4a86c8"/></svg>
<svg style="left:1174px;top:180px" width="15" height="12" viewBox="0 0 15 12"><rect x="0" y="0" width="5" height="12" rx="1" fill="#4a86c8"/><path d="M5,4 L10,1 H15 V11 H10 L5,8z" fill="#4a86c8"/><rect x="10" y="3" width="3" height="6" fill="#cfe0f2"/></svg>
<svg style="left:1196px;top:177px" width="18" height="18" viewBox="0 0 18 18"><defs><linearGradient id="hg1196" x1="0" y1="0" x2="0" y2="1"><stop offset="0" stop-color="#e3effb"/><stop offset="1" stop-color="#a9cdf2"/></linearGradient></defs><rect x="0.75" y="0.75" width="16.5" height="16.5" rx="2" fill="url(#hg1196)" stroke="#3a6eb5" stroke-width="1.5"/><rect x="3" y="3" width="12" height="12" fill="none" stroke="#555" stroke-width="1"/><g fill="#4a86c8"><rect x="4.5" y="4.5" width="2.5" height="2.5"/><rect x="7.8" y="4.5" width="2.5" height="2.5"/><rect x="11" y="4.5" width="2.5" height="2.5"/><rect x="4.5" y="7.8" width="2.5" height="2.5"/><rect x="7.8" y="7.8" width="2.5" height="2.5"/><rect x="11" y="7.8" width="2.5" height="2.5"/><rect x="4.5" y="11" width="2.5" height="2.5"/><rect x="7.8" y="11" width="2.5" height="2.5"/><rect x="11" y="11" width="2.5" height="2.5"/></g></svg>
<svg style="left:1220px;top:177px" width="18" height="18" viewBox="0 0 18 18"><defs><linearGradient id="hg1220" x1="0" y1="0" x2="0" y2="1"><stop offset="0" stop-color="#e3effb"/><stop offset="1" stop-color="#a9cdf2"/></linearGradient></defs><rect x="0.75" y="0.75" width="16.5" height="16.5" rx="2" fill="url(#hg1220)" stroke="#3a6eb5" stroke-width="1.5"/><rect x="3" y="3" width="12" height="12" fill="none" stroke="#555" stroke-width="1"/><path d="M9,13 V5" stroke="#4a86c8"/><path d="M9,13 L5,10" stroke="#4caa3c"/><path d="M9,13 L14,10" stroke="#e0195a"/></svg>
<svg style="left:1244px;top:177px" width="18" height="18" viewBox="0 0 18 18"><defs><linearGradient id="hg1244" x1="0" y1="0" x2="0" y2="1"><stop offset="0" stop-color="#e3effb"/><stop offset="1" stop-color="#a9cdf2"/></linearGradient></defs><rect x="0.75" y="0.75" width="16.5" height="16.5" rx="2" fill="url(#hg1244)" stroke="#3a6eb5" stroke-width="1.5"/><rect x="3" y="3" width="12" height="12" fill="none" stroke="#555" stroke-width="1"/><rect x="11" y="4" width="2.5" height="3" fill="#f0c020"/><rect x="11" y="7" width="2.5" height="3" fill="#f07a1a"/><rect x="11" y="10" width="2.5" height="4" fill="#e0302a"/></svg>
<svg style="left:1284px;top:177px" width="18" height="18" viewBox="0 0 18 18"><defs><linearGradient id="hg1284" x1="0" y1="0" x2="0" y2="1"><stop offset="0" stop-color="#e3effb"/><stop offset="1" stop-color="#a9cdf2"/></linearGradient></defs><rect x="0.75" y="0.75" width="16.5" height="16.5" rx="2" fill="url(#hg1284)" stroke="#3a6eb5" stroke-width="1.5"/><path d="M2,9 L9,4 V14z" fill="#4a86c8"/><path d="M9,4 L16,1 M9,14 L16,17" stroke="#888" stroke-width="0.8"/><path d="M10,6 A3,3 0 0 1 10,12" fill="none" stroke="#777" stroke-width="0.8"/></svg>
<svg style="left:1310px;top:179px" width="15" height="14" viewBox="0 0 15 14"><path d="M0.5,3.5 L3.5,0.5 H11.5 L14.5,3.5 V13.5 H0.5z" fill="#e8eef6" stroke="#4a86c8"/><rect x="3.5" y="4.5" width="11" height="9" fill="#dbe6f3" stroke="#4a86c8"/></svg>
<svg style="left:1348px;top:180px" width="17" height="12" viewBox="0 0 17 12"><path d="M0,3 H4 L6,0 H11 L13,3 H17 V12 H0z" fill="#4a86c8"/><circle cx="8.5" cy="7" r="3.3" fill="#fff"/><circle cx="8.5" cy="7" r="2" fill="#4a86c8"/></svg>
<svg style="left:1374px;top:178px" width="15" height="16" viewBox="0 0 15 16"><rect x="3" y="0.5" width="9" height="5" fill="#fff" stroke="#4a86c8"/><rect x="0" y="5" width="15" height="7" rx="1.5" fill="#4a86c8"/><rect x="3" y="10" width="9" height="5.5" fill="#fff" stroke="#4a86c8"/><rect x="10" y="7" width="1.5" height="1.5" fill="#fff"/><rect x="12.3" y="7" width="1.5" height="1.5" fill="#fff"/></svg>
<svg style="left:1527px;top:204px" width="22" height="20" viewBox="0 0 22 20"><path d="M1,6 L17,1 L21,14 L5,19z" fill="#eceff3" stroke="#dde2e8" stroke-width="0.8"/><rect x="4" y="5" width="13.5" height="10" rx="3" fill="#1f3fa0"/><rect x="6" y="6.5" width="10" height="7" rx="2" fill="#3d8ee0"/><path d="M6.5,7 L12,10 L6.5,13z" fill="#f2e14a"/></svg>
<svg style="left:1528px;top:158px" width="8" height="5" viewBox="0 0 8 5"><path d="M0,0 H8 L4,4.5z" fill="#505050"/></svg>
<svg style="left:1543px;top:156px" width="8" height="10" viewBox="0 0 8 10"><rect x="1.5" y="0" width="5" height="5.5" fill="#505050"/><rect x="0" y="5.5" width="8" height="1.5" fill="#505050"/><rect x="3.4" y="7" width="1.3" height="3" fill="#505050"/></svg><div class="t" style="left:12px;top:150px;font-size:20px;line-height:22px;color:#4673b8">Model Builder</div>
<svg style="left:394px;top:157px" width="8" height="5" viewBox="0 0 8 5"><path d="M0,0 H8 L4,4z" fill="#c5ccd6"/></svg>
<svg style="left:409px;top:153px" width="9" height="11" viewBox="0 0 9 11"><rect x="2" y="0" width="5" height="6" fill="#c5ccd6"/><rect x="0" y="6" width="9" height="1.5" fill="#c5ccd6"/><rect x="4" y="7" width="1.3" height="4" fill="#c5ccd6"/></svg>
<svg style="left:11px;top:179px" width="14" height="9" viewBox="0 0 14 9"><path d="M0,4.5 L5,0 V3 H14 V6 H5 V9z" fill="#4a80c0"/></svg>
<svg style="left:35px;top:179px" width="14" height="9" viewBox="0 0 14 9"><path d="M14,4.5 L9,0 V3 H0 V6 H9 V9z" fill="#b5b5b5"/></svg>
<svg style="left:62px;top:177px" width="9" height="14" viewBox="0 0 9 14"><path d="M4.5,0 L9,5 H6 V14 H3 V5 H0z" fill="#b5b5b5"/></svg>
<svg style="left:86px;top:177px" width="9" height="14" viewBox="0 0 9 14"><path d="M4.5,14 L9,9 H6 V0 H3 V9 H0z" fill="#4a80c0"/></svg>
<svg style="left:107px;top:178px" width="14" height="10" viewBox="0 0 14 10"><rect x="0" y="0" width="2" height="1.5" fill="#2d5aa0"/><rect x="4" y="0" width="9" height="1.5" fill="#2d5aa0"/><ellipse cx="7" cy="6.5" rx="6" ry="3" fill="#2d5aa0"/><circle cx="7" cy="6.5" r="1.8" fill="#fff"/><circle cx="7" cy="6.5" r="0.9" fill="#2d5aa0"/></svg>
<svg style="left:129px;top:182px" width="7" height="4" viewBox="0 0 7 4"><path d="M0,0 H7 L3.5,4z" fill="#111"/></svg>
<svg style="left:148px;top:178px" width="17" height="13" viewBox="0 0 17 13"><rect x="0" y="0" width="1.5" height="1.5" fill="#2d5aa0"/><rect x="3" y="0" width="7" height="1.5" fill="#2d5aa0"/><rect x="0" y="3.0" width="1" height="1" fill="#999"/><rect x="2" y="3.0" width="8" height="1" fill="#aaa"/><rect x="0" y="5.5" width="1" height="1" fill="#999"/><rect x="2" y="5.5" width="8" height="1" fill="#aaa"/><rect x="0" y="8.0" width="1" height="1" fill="#999"/><rect x="2" y="8.0" width="8" height="1" fill="#aaa"/><rect x="0" y="10.5" width="1" height="1" fill="#999"/><rect x="2" y="10.5" width="8" height="1" fill="#aaa"/><path d="M13,13 V1 M10.5,3.5 L13,0.5 L15.5,3.5" stroke="#2d5aa0" stroke-width="1.3" fill="none"/></svg>
<svg style="left:172px;top:178px" width="17" height="13" viewBox="0 0 17 13"><rect x="0" y="0.0" width="1.5" height="1.5" fill="#2d5aa0"/><rect x="3" y="0.0" width="8" height="1.5" fill="#2d5aa0"/><rect x="0" y="2.6" width="1.5" height="1.5" fill="#2d5aa0"/><rect x="3" y="2.6" width="8" height="1.5" fill="#2d5aa0"/><rect x="0" y="5.2" width="1.5" height="1.5" fill="#2d5aa0"/><rect x="3" y="5.2" width="8" height="1.5" fill="#2d5aa0"/><rect x="0" y="7.800000000000001" width="1.5" height="1.5" fill="#2d5aa0"/><rect x="3" y="7.800000000000001" width="8" height="1.5" fill="#2d5aa0"/><rect x="0" y="10.4" width="1.5" height="1.5" fill="#2d5aa0"/><rect x="3" y="10.4" width="8" height="1.5" fill="#2d5aa0"/><path d="M13.5,0 V12 M11,9.5 L13.5,12.5 L16,9.5" stroke="#2d5aa0" stroke-width="1.3" fill="none"/></svg>
<svg style="left:198px;top:178px" width="12" height="13" viewBox="0 0 12 13"><rect x="0" y="0.0" width="7" height="1.5" fill="#aaa"/><rect x="9" y="0.0" width="3" height="1.5" fill="#2d5aa0"/><rect x="0" y="2.6" width="7" height="1.5" fill="#aaa"/><rect x="9" y="2.6" width="3" height="1.5" fill="#2d5aa0"/><rect x="0" y="5.2" width="7" height="1.5" fill="#aaa"/><rect x="9" y="5.2" width="3" height="1.5" fill="#2d5aa0"/><rect x="0" y="7.800000000000001" width="7" height="1.5" fill="#aaa"/><rect x="9" y="7.800000000000001" width="3" height="1.5" fill="#2d5aa0"/><rect x="0" y="10.4" width="7" height="1.5" fill="#aaa"/><rect x="9" y="10.4" width="3" height="1.5" fill="#2d5aa0"/></svg>
<svg style="left:219px;top:182px" width="7" height="4" viewBox="0 0 7 4"><path d="M0,0 H7 L3.5,4z" fill="#111"/></svg>
<div class="a" style="left:8px;top:197px;width:409px;height:803px;background:#fff;border:1px solid #cfd0d3"></div>
<div class="a" style="left:9px;top:647px;width:407px;height:18px;background:#dadbde"></div>
<svg style="left:15px;top:203px" width="6" height="6" viewBox="0 0 6 6"><path d="M6,0 V6 H0z" fill="#222"/></svg>
<svg style="left:29px;top:199px" width="16" height="16" viewBox="0 0 16 16"><path d="M8.5,0.5 L16,6.5 L8.5,12.5 L1,6.5z" fill="#4672b0"/><path d="M8,1.5 L2,6.5 L8,11.5 M2,6.5 L6,6.5" stroke="#fff" stroke-width="1.1" fill="none"/></svg>
<div class="t" style="left:51px;top:200px">Untitled.mph&nbsp; <i>(root)</i></div>
<svg style="left:35px;top:221px" width="6" height="6" viewBox="0 0 6 6"><path d="M6,0 V6 H0z" fill="#222"/></svg>
<svg style="left:49px;top:217px" width="16" height="16" viewBox="0 0 16 16"><circle cx="7.5" cy="7.5" r="7" fill="none" stroke="#4672b0" stroke-width="1.2"/><ellipse cx="7.5" cy="7.5" rx="3" ry="7" fill="none" stroke="#4672b0"/><path d="M0.5,7.5 H14.5 M2,4 H13 M2,11 H13 M7.5,0.5 V14.5" stroke="#4672b0"/></svg>
<div class="t" style="left:71px;top:218px">Global Definitions</div>
<svg style="left:69px;top:235px" width="16" height="16" viewBox="0 0 16 16"><text x="0" y="10" font-family="Liberation Sans" font-weight="bold" font-size="11" fill="#4672b0">P</text><rect x="7.5" y="7" width="1.6" height="5" fill="#4672b0"/><rect x="7.5" y="4.8" width="1.6" height="1.4" fill="#4672b0"/></svg>
<div class="t" style="left:91px;top:236px">Parameters 1</div>
<svg style="left:55px;top:257px" width="6" height="6" viewBox="0 0 6 6"><path d="M6,0 V6 H0z" fill="#222"/></svg>
<svg style="left:69px;top:253px" width="16" height="16" viewBox="0 0 16 16"><rect x="5" y="1" width="4" height="4" fill="#f9a912"/><rect x="0" y="4" width="4" height="4" fill="#f9a912"/><rect x="5" y="6.1" width="4" height="4" fill="#f48b19"/><rect x="10" y="4" width="4" height="4" fill="#f48b19"/><rect x="0" y="9" width="4" height="4" fill="#f48b19"/><rect x="10" y="9" width="4" height="4" fill="#cf7014"/><rect x="5" y="11.1" width="4" height="4" fill="#cf7014"/></svg>
<div class="t" style="left:91px;top:254px">Materials</div>
<svg style="left:76px;top:273px" width="6" height="9" viewBox="0 0 6 9"><path d="M0.5,0.5 L5,4.5 L0.5,8.5z" fill="#fff" stroke="#8d8d8d"/></svg>
<svg style="left:89px;top:271px" width="16" height="16" viewBox="0 0 16 16"><rect x="5" y="1" width="4" height="4" fill="#f9a912"/><rect x="0" y="4" width="4" height="4" fill="#f9a912"/><rect x="5" y="6.1" width="4" height="4" fill="#f48b19"/><rect x="10" y="4" width="4" height="4" fill="#f48b19"/><rect x="0" y="9" width="4" height="4" fill="#f48b19"/><rect x="10" y="9" width="4" height="4" fill="#cf7014"/><rect x="5" y="11.1" width="4" height="4" fill="#cf7014"/></svg>
<div class="t" style="left:111px;top:272px">Skin&nbsp; <i>(mat1)</i></div>
<svg style="left:35px;top:293px" width="6" height="6" viewBox="0 0 6 6"><path d="M6,0 V6 H0z" fill="#222"/></svg>
<svg style="left:49px;top:289px" width="16" height="16" viewBox="0 0 16 16"><path d="M0,1 H11 L14,4 V15 H3 L0,12z" fill="#4f86c6"/><path d="M0.5,1.5 L3.5,4.5 H14 M3.5,4.5 V15" stroke="#a9c6e8" fill="none"/></svg>
<div class="t" style="left:71px;top:290px">Component 1&nbsp; <i>(comp1)</i></div>
<svg style="left:56px;top:309px" width="6" height="9" viewBox="0 0 6 9"><path d="M0.5,0.5 L5,4.5 L0.5,8.5z" fill="#fff" stroke="#8d8d8d"/></svg>
<svg style="left:69px;top:307px" width="16" height="16" viewBox="0 0 16 16"><rect x="0" y="2" width="10" height="2" fill="#3e76b8"/><rect x="0" y="6" width="10" height="2" fill="#3e76b8"/><rect x="0" y="10" width="10" height="2" fill="#3e76b8"/></svg>
<div class="t" style="left:91px;top:308px">Definitions</div>
<svg style="left:55px;top:329px" width="6" height="6" viewBox="0 0 6 6"><path d="M6,0 V6 H0z" fill="#222"/></svg>
<svg style="left:69px;top:325px" width="16" height="16" viewBox="0 0 16 16"><path d="M8,1 L2,15 M8,1 L14,15 M0,2 C2,9 11,9 14,5" fill="none" stroke="#e0604a" stroke-width="1.1"/><circle cx="8" cy="1.5" r="1.2" fill="none" stroke="#e0604a"/></svg>
<div class="t" style="left:91px;top:326px">Geometry 1</div>
<svg style="left:89px;top:343px" width="16" height="16" viewBox="0 0 16 16"><path d="M7.5,0.5 L14.5,3.5 V11.5 L7.5,14.5 L0.5,11.5 V3.5z" fill="#dcdcdc" stroke="#e0604a"/><path d="M0.5,3.5 L7.5,6.5 L14.5,3.5 M7.5,6.5 V14.5" fill="none" stroke="#e0604a"/><path d="M0.5,3.5 L7.5,0.5 L14.5,3.5 L7.5,6.5z" fill="#efefef" stroke="#e0604a"/></svg>
<div class="t" style="left:111px;top:344px">Block 1&nbsp; <i>(blk1)</i></div>
<svg style="left:89px;top:361px" width="16" height="16" viewBox="0 0 16 16"><rect x="0.5" y="0.5" width="15" height="15" fill="#f2b3a8" stroke="#4caa3c"/><path d="M3,6 H13 V12 H3z M10,2 V13 M5,5 V16" fill="none" stroke="#e0604a"/></svg>
<div class="t" style="left:111px;top:362px">Form Union&nbsp; <i>(fin)</i></div>
<svg style="left:55px;top:383px" width="6" height="6" viewBox="0 0 6 6"><path d="M6,0 V6 H0z" fill="#222"/></svg>
<svg style="left:69px;top:379px" width="16" height="16" viewBox="0 0 16 16"><rect x="5" y="1" width="4" height="4" fill="#f9a912"/><rect x="0" y="4" width="4" height="4" fill="#f9a912"/><rect x="5" y="6.1" width="4" height="4" fill="#f48b19"/><rect x="10" y="4" width="4" height="4" fill="#f48b19"/><rect x="0" y="9" width="4" height="4" fill="#f48b19"/><rect x="10" y="9" width="4" height="4" fill="#cf7014"/><rect x="5" y="11.1" width="4" height="4" fill="#cf7014"/></svg>
<div class="t" style="left:91px;top:380px">Materials</div>
<svg style="left:76px;top:399px" width="6" height="9" viewBox="0 0 6 9"><path d="M0.5,0.5 L5,4.5 L0.5,8.5z" fill="#fff" stroke="#8d8d8d"/></svg>
<svg style="left:89px;top:397px" width="16" height="16" viewBox="0 0 16 16"><rect x="5" y="1" width="4" height="4" fill="#f9a912"/><rect x="0" y="4" width="4" height="4" fill="#f9a912"/><rect x="5" y="6.1" width="4" height="4" fill="#f48b19"/><rect x="10" y="4" width="4" height="4" fill="#f48b19"/><rect x="0" y="9" width="4" height="4" fill="#f48b19"/><rect x="10" y="9" width="4" height="4" fill="#cf7014"/><rect x="5" y="11.1" width="4" height="4" fill="#cf7014"/></svg>
<div class="t" style="left:111px;top:398px">Skin&nbsp; <i>(mat2)</i></div>
<svg style="left:55px;top:419px" width="6" height="6" viewBox="0 0 6 6"><path d="M6,0 V6 H0z" fill="#222"/></svg>
<svg style="left:69px;top:415px" width="16" height="16" viewBox="0 0 16 16"><path d="M1.5,0 C0,3 3,6 1.5,9 C0,12 2,14 1.5,15" fill="none" stroke="#f39a1f" stroke-width="1.1"/><rect x="4" y="1" width="12" height="12" rx="2" fill="#4f86c6"/><path d="M6,12 L11,3 L14,12z" fill="#f2c21a"/><path d="M9,7 L11,3 L12,7z" fill="#f07a1a"/><path d="M5,12 H15 V13 H5z" fill="#3cb3d9"/></svg>
<div class="t" style="left:91px;top:416px">Bioheat Transfer&nbsp; <i>(ht)</i></div>
<svg style="left:76px;top:435px" width="6" height="9" viewBox="0 0 6 9"><path d="M0.5,0.5 L5,4.5 L0.5,8.5z" fill="#fff" stroke="#8d8d8d"/></svg>
<svg style="left:89px;top:433px" width="16" height="16" viewBox="0 0 16 16"><path d="M2,2 H13 C16.5,2 16.5,14 13,14 H2z" fill="#0f56a0"/><ellipse cx="2.2" cy="8" rx="1.8" ry="6" fill="#0f56a0" stroke="#c9d9ea" stroke-width="0.9"/><path d="M3,8 H16" stroke="#fff" stroke-width="0.9"/><rect x="0.5" y="0.5" width="3.5" height="3.5" fill="#fff" stroke="#111" stroke-width="1"/></svg>
<div class="t" style="left:111px;top:434px">Biological Tissue 1</div>
<svg style="left:89px;top:451px" width="16" height="16" viewBox="0 0 16 16"><path d="M2,2 H13 C16.5,2 16.5,14 13,14 H2z" fill="#0f56a0"/><ellipse cx="2.2" cy="8" rx="1.8" ry="6" fill="#0f56a0" stroke="#c9d9ea" stroke-width="0.9"/><path d="M3,8 H16" stroke="#fff" stroke-width="0.9"/><rect x="0.5" y="0.5" width="3.5" height="3.5" fill="#fff" stroke="#111" stroke-width="1"/></svg>
<div class="t" style="left:111px;top:452px">Initial Values 1</div>
<svg style="left:89px;top:469px" width="16" height="16" viewBox="0 0 16 16"><path d="M2,2 H13 C16.5,2 16.5,14 13,14 H2z" fill="#dcdcdc"/><path d="M2,8 H16 C16,11 15,14 13,14 H2z" fill="#0f56a0"/><ellipse cx="2.2" cy="8" rx="1.8" ry="6" fill="#e8e8e8" stroke="#aaa" stroke-width="0.9"/><rect x="0.5" y="0.5" width="3.5" height="3.5" fill="#fff" stroke="#111" stroke-width="1"/></svg>
<div class="t" style="left:111px;top:470px">Thermal Insulation 1</div>
<svg style="left:89px;top:487px" width="16" height="16" viewBox="0 0 16 16"><path d="M2,2 H13 C16.5,2 16.5,14 13,14 H2z" fill="#0f56a0"/><ellipse cx="2.2" cy="8" rx="1.8" ry="6" fill="#0f56a0" stroke="#c9d9ea" stroke-width="0.9"/><path d="M3,8 H16" stroke="#fff" stroke-width="0.9"/></svg>
<div class="t" style="left:111px;top:488px">Heat Source 1</div>
<svg style="left:69px;top:505px" width="16" height="16" viewBox="0 0 16 16"><path d="M8,0.5 L15.5,14.5 H0.5z" fill="#e8eef3" stroke="#3d5a70" stroke-width="1.2"/><path d="M4,8 H12 M2,11.5 H14 M8,0.5 L4,14.5 M8,0.5 L12,14.5 M4,8 L10,14.5 M12,8 L6,14.5" stroke="#6b8295" stroke-width="0.6"/></svg>
<div class="t" style="left:91px;top:506px">Mesh 1</div>
<svg style="left:35px;top:527px" width="6" height="6" viewBox="0 0 6 6"><path d="M6,0 V6 H0z" fill="#222"/></svg>
<svg style="left:49px;top:523px" width="16" height="16" viewBox="0 0 16 16"><g fill="none" stroke="#2b9bb5" stroke-width="1.25"><path d="M0.1,6.1 C1,4.5 2,4.2 3,5 C4,6 4.8,7.5 6,8.2"/><circle cx="7.8" cy="8.7" r="1.9"/><circle cx="10.7" cy="5.4" r="1.9"/><circle cx="13.6" cy="8.7" r="1.9"/></g></svg>
<div class="t" style="left:71px;top:524px">Study 1</div>
<svg style="left:69px;top:541px" width="16" height="16" viewBox="0 0 16 16"><g fill="none" stroke="#777" stroke-width="1"><path d="M0.9,1.5 V14.8 H15"/></g><path d="M0.9,0 L-0.8,2.5 H2.6z M16,14.8 L13.5,13.1 V16.5z" fill="#777"/><path d="M3.1,3.1 C5,8 8,10.5 15.6,11.2" fill="none" stroke="#aaa" stroke-width="1"/><path d="M3.1,11.2 C6,10 7,1.7 9,1.7 C11,1.7 11.5,9 13,9 H15.6" fill="none" stroke="#2b9bb5" stroke-width="1.3"/></svg>
<div class="t" style="left:91px;top:542px">Step 1: Time Dependent</div>
<svg style="left:56px;top:561px" width="6" height="9" viewBox="0 0 6 9"><path d="M0.5,0.5 L5,4.5 L0.5,8.5z" fill="#fff" stroke="#8d8d8d"/></svg>
<svg style="left:69px;top:559px" width="16" height="16" viewBox="0 0 16 16"><path d="M0.6,4 V16.8 M4.6,7 V16.8 M8.7,10 V16.8 M12.7,13.3 V16.8" stroke="#aaa" stroke-width="1"/><rect x="0.2" y="1.2" width="3.7" height="2.9" fill="#4a80c0"/><rect x="4.2" y="4.1" width="3.7" height="2.9" fill="#4a80c0"/><rect x="8.2" y="7.1" width="3.7" height="2.9" fill="#4a80c0"/><rect x="12.3" y="10.3" width="3.7" height="3" fill="#4a80c0"/></svg>
<div class="t" style="left:91px;top:560px">Solver Configurations</div>
<svg style="left:35px;top:581px" width="6" height="6" viewBox="0 0 6 6"><path d="M6,0 V6 H0z" fill="#222"/></svg>
<svg style="left:49px;top:577px" width="16" height="16" viewBox="0 0 16 16"><g fill="none" stroke="#6f6f6f" stroke-width="1"><path d="M2.5,9 V0.5 H10 V3"/><path d="M4.2,10 V2 H12 V3.3"/><path d="M0.5,8.5 V10.8 L4,14.8 H15.8 V12.5"/><path d="M0.5,10.8 H4 L4,14.8 M4,12.5 H15.8"/></g><rect x="5.9" y="3.3" width="9" height="8" fill="#fff" stroke="#6f6f6f"/><rect x="7" y="5" width="6.6" height="5.4" fill="#a8226a"/></svg>
<div class="t" style="left:71px;top:578px">Results</div>
<svg style="left:56px;top:597px" width="6" height="9" viewBox="0 0 6 9"><path d="M0.5,0.5 L5,4.5 L0.5,8.5z" fill="#fff" stroke="#8d8d8d"/></svg>
<svg style="left:69px;top:595px" width="16" height="16" viewBox="0 0 16 16"><rect x="1.0" y="0" width="2" height="1.2" fill="#a8226a"/><rect x="4.5" y="0" width="2" height="1.2" fill="#c9a6b9"/><rect x="8.0" y="0" width="2" height="1.2" fill="#a8226a"/><rect x="11.5" y="0" width="2" height="1.2" fill="#c9a6b9"/><rect x="1.0" y="3" width="2" height="1.2" fill="#c9a6b9"/><rect x="4.5" y="3" width="2" height="1.2" fill="#a8226a"/><rect x="8.0" y="3" width="2" height="1.2" fill="#c9a6b9"/><rect x="11.5" y="3" width="2" height="1.2" fill="#a8226a"/><rect x="1.0" y="6" width="2" height="1.2" fill="#a8226a"/><rect x="4.5" y="6" width="2" height="1.2" fill="#c9a6b9"/><rect x="8.0" y="6" width="2" height="1.2" fill="#a8226a"/><rect x="11.5" y="6" width="2" height="1.2" fill="#c9a6b9"/><rect x="1.0" y="9" width="2" height="1.2" fill="#c9a6b9"/><rect x="4.5" y="9" width="2" height="1.2" fill="#a8226a"/><rect x="8.0" y="9" width="2" height="1.2" fill="#c9a6b9"/><rect x="11.5" y="9" width="2" height="1.2" fill="#a8226a"/><rect x="1.0" y="12" width="2" height="1.2" fill="#a8226a"/><rect x="4.5" y="12" width="2" height="1.2" fill="#c9a6b9"/><rect x="8.0" y="12" width="2" height="1.2" fill="#a8226a"/><rect x="11.5" y="12" width="2" height="1.2" fill="#c9a6b9"/></svg>
<div class="t" style="left:91px;top:596px">Data Sets</div>
<svg style="left:69px;top:613px" width="16" height="16" viewBox="0 0 16 16"><text x="0" y="6.5" font-family="Liberation Sans" font-weight="bold" font-size="7" fill="#a8226a">8.85</text><text x="0" y="13.5" font-family="Liberation Sans" font-weight="bold" font-size="7" fill="#a8226a">e-12</text></svg>
<div class="t" style="left:91px;top:614px">Derived Values</div>
<svg style="left:69px;top:631px" width="16" height="16" viewBox="0 0 16 16"><rect x="0.5" y="0.5" width="13" height="12" fill="#fff" stroke="#a8226a"/><path d="M0.5,3.5 H13.5 M0.5,6.5 H13.5 M0.5,9.5 H13.5 M4.5,0.5 V12.5 M9.5,0.5 V12.5" stroke="#a8226a"/><rect x="5" y="4" width="4" height="5" fill="#d9a2bf"/></svg>
<div class="t" style="left:91px;top:632px">Tables</div>
<svg style="left:55px;top:653px" width="6" height="6" viewBox="0 0 6 6"><path d="M6,0 V6 H0z" fill="#222"/></svg>
<svg style="left:69px;top:649px" width="16" height="16" viewBox="0 0 16 16"><path d="M0,1 H11 L15,5 V15 H4 L0,11z" fill="#a8226a"/><path d="M0.5,1.5 L4,5 H15 M4,5 V15" stroke="#e7a9c8" fill="none" stroke-width="0.8"/></svg>
<div class="t" style="left:91px;top:650px">Temperature (ht)</div>
<svg style="left:89px;top:667px" width="16" height="16" viewBox="0 0 16 16"><g fill="none" stroke="#aaa"><path d="M0.5,1.5 H12 L15.5,5 V15.5 H4 L0.5,12z M0.5,1.5 L4,5 H15.5 M4,5 V15.5"/><path d="M12,1.5 V12 H0.5 M12,12 L15.5,15.5" stroke="#ccc"/></g><path d="M0.5,1 H12 L15.5,5 H4z" fill="#a8226a"/></svg>
<div class="t" style="left:111px;top:668px">Surface 1</div>
<svg style="left:56px;top:687px" width="6" height="9" viewBox="0 0 6 9"><path d="M0.5,0.5 L5,4.5 L0.5,8.5z" fill="#fff" stroke="#8d8d8d"/></svg>
<svg style="left:69px;top:685px" width="16" height="16" viewBox="0 0 16 16"><path d="M0,3 L3,0 H9 V6 H15 V15 H3 L0,12z" fill="#a8226a"/><path d="M0,3 L3,5 H15 M3,5 V15" stroke="#e7a9c8" fill="none" stroke-width="0.8"/><path d="M12,0 V5 M9.5,2.5 H14.5 M10,1 L14,4 M14,1 L10,4" stroke="#333" stroke-width="1"/></svg>
<div class="t" style="left:91px;top:686px">Isothermal Contours (ht)</div>
<svg style="left:69px;top:703px" width="16" height="16" viewBox="0 0 16 16"><path d="M0.5,4 L4,0.5 H15 V8 L11.5,11.5 H0.5z" fill="#fff" stroke="#a8226a"/><path d="M0.5,4 H11.5 V11.5 M11.5,4 L15,0.5" stroke="#a8226a" fill="none"/><rect x="3" y="6" width="6" height="4" fill="none" stroke="#a8226a"/><path d="M2,2 H13" stroke="#a8226a"/></svg>
<div class="t" style="left:91px;top:704px">Export</div>
<svg style="left:69px;top:721px" width="16" height="16" viewBox="0 0 16 16"><rect x="0.5" y="0.5" width="14" height="14" fill="#fff" stroke="#777"/><path d="M7.5,0.5 V14.5" stroke="#777"/><path d="M2,3 H6 M2,6 H6 M2,9 H6 M9,3 H13 M9,6 H13" stroke="#a8226a"/><path d="M8,8 L14,15" stroke="#a8226a" stroke-width="2"/></svg>
<div class="t" style="left:91px;top:722px">Reports</div><div class="t" style="left:434px;top:150px;font-size:20px;line-height:22px;color:#4673b8">Settings</div>
<svg style="left:859px;top:157px" width="8" height="5" viewBox="0 0 8 5"><path d="M0,0 H8 L4,4z" fill="#c5ccd6"/></svg>
<svg style="left:873px;top:153px" width="9" height="11" viewBox="0 0 9 11"><rect x="2" y="0" width="5" height="6" fill="#c5ccd6"/><rect x="0" y="6" width="9" height="1.5" fill="#c5ccd6"/><rect x="4" y="7" width="1.3" height="4" fill="#c5ccd6"/></svg>
<div class="t" style="left:434px;top:180px;font-size:14px;line-height:16px;color:#4a76b8">3D Plot Group</div>
<svg style="left:434px;top:200px" width="16" height="13" viewBox="0 0 16 13"><rect x="0.5" y="0.5" width="15" height="12" fill="#fff" stroke="#8a8a8a"/><path d="M0.5,2.5 H15.5" stroke="#8a8a8a"/><rect x="2" y="4" width="12" height="7" fill="#a8226a"/><circle cx="5" cy="7.5" r="2.6" fill="#a8226a" stroke="#fff" stroke-width="0.8"/><path d="M3.5,7.5 H6.5 M5.3,6.3 L6.5,7.5 L5.3,8.7" stroke="#fff" stroke-width="0.9" fill="none"/></svg>
<div class="t" style="left:455px;top:199px;">Plot</div>
<svg style="left:483px;top:201px" width="16" height="9" viewBox="0 0 16 9"><rect x="0" y="0" width="2" height="9" fill="#a8226a"/><path d="M3,4.5 L8,0 V3 H16 V6 H8 V9z" fill="#a8226a"/></svg>
<svg style="left:508px;top:201px" width="14" height="9" viewBox="0 0 14 9"><path d="M0,4.5 L5,0 V3 H14 V6 H5 V9z" fill="#a8226a"/></svg>
<svg style="left:532px;top:201px" width="14" height="9" viewBox="0 0 14 9"><path d="M14,4.5 L9,0 V3 H0 V6 H9 V9z" fill="#b3b3b3"/></svg>
<svg style="left:555px;top:201px" width="16" height="9" viewBox="0 0 16 9"><rect x="14" y="0" width="2" height="9" fill="#b3b3b3"/><path d="M13,4.5 L8,0 V3 H0 V6 H8 V9z" fill="#b3b3b3"/></svg>
<div class="t" style="left:434px;top:233px;">Label:</div>
<div class="a" style="left:474px;top:230px;width:377px;height:19px;background:#fff;border:1px solid #c8c8c8"></div>
<div class="t" style="left:478px;top:232px;">Temperature (ht)</div>
<div class="a" style="left:859px;top:228px;width:21px;height:23px;background:linear-gradient(#f6f6f6,#e4e4e4);border:1px solid #adadad;border-radius:2px"></div>
<svg style="left:861px;top:231px" width="16" height="16" viewBox="0 0 16 16"><rect x="2.5" y="0.5" width="13" height="12" fill="#fff" stroke="#555" rx="1"/><rect x="3" y="1" width="12" height="2" fill="#8a8a8a"/><path d="M6.5,6 H13.5 M6.5,8.5 H13.5" stroke="#3a9a3a" stroke-width="1.1"/><path d="M0.5,15 L4.5,11" stroke="#3a9a3a" stroke-width="1.5"/><path d="M2,10 H6 V14z" fill="#3a9a3a"/></svg>
<div class="a" style="left:428px;top:260px;width:457px;height:25px;background:#dee7f3"></div>
<svg style="left:433px;top:270px" width="9" height="5" viewBox="0 0 9 5"><path d="M0,0 H9 L4.5,5z" fill="#444"/></svg>
<div class="t" style="left:454px;top:266px;font-size:13px">Data</div>
<div class="t" style="left:434px;top:299px;">Data set:</div>
<div class="a cb" style="left:500px;top:295px;width:351px;height:20px"></div>
<div class="t" style="left:512px;top:298px">Study 1/Solution 1 (sol1)</div>
<svg style="left:837px;top:302px" width="8" height="5" viewBox="0 0 8 5"><path d="M0,0 H8 L4,5z" fill="#111"/></svg>
<div class="a" style="left:859px;top:294px;width:21px;height:23px;background:linear-gradient(#f6f6f6,#e4e4e4);border:1px solid #adadad;border-radius:2px"></div>
<svg style="left:863px;top:297px" width="14" height="14" viewBox="0 0 14 14"><path d="M0,0.5 H5 M0,2.5 H5 M2,5 H6 M2,7.5 H6 M2,10 H6 M0,12.5 H6" stroke="#333" stroke-width="1"/><path d="M8,5 H11.5 V13 H7" stroke="#3a9a3a" stroke-width="1.3" fill="none"/><path d="M6,5 L9,2.5 V7.5z" fill="#3a9a3a"/></svg>
<div class="t" style="left:434px;top:326px;">Time (ms):</div>
<div class="a cb" style="left:500px;top:323px;width:380px;height:20px"></div>
<div class="t" style="left:512px;top:326px">100</div>
<svg style="left:866px;top:330px" width="8" height="5" viewBox="0 0 8 5"><path d="M0,0 H8 L4,5z" fill="#111"/></svg>
<div class="a" style="left:428px;top:354px;width:457px;height:25px;background:#dee7f3"></div>
<svg style="left:434px;top:362px" width="6" height="9" viewBox="0 0 6 9"><path d="M0.5,0.5 L5.5,4.5 L0.5,8.5z" fill="#fff" stroke="#8d8d8d"/></svg>
<div class="t" style="left:454px;top:360px;font-size:13px">Title</div>
<div class="a" style="left:428px;top:381px;width:457px;height:25px;background:#dee7f3"></div>
<svg style="left:433px;top:391px" width="9" height="5" viewBox="0 0 9 5"><path d="M0,0 H9 L4.5,5z" fill="#444"/></svg>
<div class="t" style="left:454px;top:387px;font-size:13px">Plot Settings</div>
<div class="t" style="left:434px;top:419px;">View:</div>
<div class="a cb" style="left:471px;top:416px;width:380px;height:20px"></div>
<div class="t" style="left:483px;top:419px">Automatic</div>
<svg style="left:837px;top:423px" width="8" height="5" viewBox="0 0 8 5"><path d="M0,0 H8 L4,5z" fill="#111"/></svg>
<div class="a" style="left:859px;top:415px;width:21px;height:23px;background:linear-gradient(#f6f6f6,#e4e4e4);border:1px solid #adadad;border-radius:2px"></div>
<svg style="left:863px;top:418px" width="14" height="14" viewBox="0 0 14 14"><path d="M0,0.5 H5 M0,2.5 H5 M2,5 H6 M2,7.5 H6 M2,10 H6 M0,12.5 H6" stroke="#333" stroke-width="1"/><path d="M8,5 H11.5 V13 H7" stroke="#3a9a3a" stroke-width="1.3" fill="none"/><path d="M6,5 L9,2.5 V7.5z" fill="#3a9a3a"/></svg>
<div class="a" style="left:434px;top:445px;width:14px;height:13px;background:#fff;border:1px solid #6f6f6f"></div>
<div class="t" style="left:453px;top:445px;">Show hidden entities</div>
<div class="a" style="left:434px;top:466px;width:14px;height:13px;background:#fff;border:1px solid #6f6f6f"></div>
<div class="t" style="left:453px;top:466px;">Propagate hiding to lower dimensions</div>
<div class="a" style="left:434px;top:498px;width:444px;height:68px;border:1px solid #d8e0ea;border-radius:3px"></div>
<div class="a" style="left:444px;top:490px;width:133px;height:14px;background:#f9fafe"></div>
<div class="a" style="left:448px;top:491px;width:14px;height:13px;background:#fff;border:1px solid #6f6f6f"></div>
<svg style="left:450px;top:493px" width="10" height="10" viewBox="0 0 10 10"><path d="M1,5 L4,8.5 L9,1" fill="none" stroke="#111" stroke-width="1.6"/></svg>
<div class="t" style="left:467px;top:491px;">Plot data set edges</div>
<div class="t" style="left:444px;top:515px;">Color:</div>
<div class="a cb" style="left:490px;top:511px;width:379px;height:20px"></div>
<div class="t" style="left:502px;top:514px">Black</div>
<svg style="left:855px;top:518px" width="8" height="5" viewBox="0 0 8 5"><path d="M0,0 H8 L4,5z" fill="#111"/></svg>
<div class="t" style="left:444px;top:541px;">Frame:</div>
<div class="a cb" style="left:490px;top:537px;width:379px;height:20px"></div>
<div class="t" style="left:502px;top:540px">Material&nbsp; (X, Y, Z)</div>
<svg style="left:855px;top:544px" width="8" height="5" viewBox="0 0 8 5"><path d="M0,0 H8 L4,5z" fill="#111"/></svg>
<div class="a" style="left:428px;top:577px;width:457px;height:25px;background:#dee7f3"></div>
<svg style="left:433px;top:587px" width="9" height="5" viewBox="0 0 9 5"><path d="M0,0 H9 L4.5,5z" fill="#444"/></svg>
<div class="t" style="left:454px;top:583px;font-size:13px">Color Legend</div>
<div class="a" style="left:434px;top:623px;width:444px;height:108px;border:1px solid #d8e0ea;border-radius:3px"></div>
<div class="a" style="left:444px;top:615px;width:105px;height:14px;background:#f9fafe"></div>
<div class="a" style="left:448px;top:615px;width:14px;height:13px;background:#fff;border:1px solid #6f6f6f"></div>
<svg style="left:450px;top:617px" width="10" height="10" viewBox="0 0 10 10"><path d="M1,5 L4,8.5 L9,1" fill="none" stroke="#111" stroke-width="1.6"/></svg>
<div class="t" style="left:467px;top:616px;">Show legends</div>
<div class="a" style="left:445px;top:636px;width:14px;height:13px;background:#fff;border:1px solid #6f6f6f"></div>
<div class="t" style="left:464px;top:637px;">Show maximum and minimum values</div>
<div class="a" style="left:445px;top:657px;width:14px;height:13px;background:#fff;border:1px solid #6f6f6f"></div>
<div class="t" style="left:464px;top:658px;">Show units</div>
<div class="t" style="left:444px;top:682px;">Position:</div>
<div class="a cb" style="left:509px;top:678px;width:360px;height:20px"></div>
<div class="t" style="left:521px;top:681px">Right</div>
<svg style="left:855px;top:685px" width="8" height="5" viewBox="0 0 8 5"><path d="M0,0 H8 L4,5z" fill="#111"/></svg>
<div class="t" style="left:444px;top:708px;">Text color:</div>
<div class="a cb" style="left:509px;top:704px;width:360px;height:20px"></div>
<div class="t" style="left:521px;top:707px">Black</div>
<svg style="left:855px;top:711px" width="8" height="5" viewBox="0 0 8 5"><path d="M0,0 H8 L4,5z" fill="#111"/></svg>
<div class="a" style="left:428px;top:744px;width:457px;height:25px;background:#dee7f3"></div>
<svg style="left:434px;top:752px" width="6" height="9" viewBox="0 0 6 9"><path d="M0.5,0.5 L5.5,4.5 L0.5,8.5z" fill="#fff" stroke="#8d8d8d"/></svg>
<div class="t" style="left:454px;top:750px;font-size:13px">Number Format</div>
<div class="a" style="left:428px;top:771px;width:457px;height:25px;background:#dee7f3"></div>
<svg style="left:434px;top:779px" width="6" height="9" viewBox="0 0 6 9"><path d="M0.5,0.5 L5.5,4.5 L0.5,8.5z" fill="#fff" stroke="#8d8d8d"/></svg>
<div class="t" style="left:454px;top:777px;font-size:13px">Window Settings</div><div class="a" style="left:1561px;top:170px;width:355px;height:1px;background:#d4d4d4"></div>
<div class="a" style="left:1565px;top:147px;width:106px;height:24px;border:1px solid #d4d4d4;border-bottom:none;background:#f9fafe"></div>
<div class="a" style="left:1678px;top:147px;width:89px;height:23px;background:#ebebeb"></div>
<div class="t" style="left:1570px;top:153px;font-size:13px;color:#2b5797">Add Material</div>
<div class="t" style="left:1653px;top:150px;font-size:14px;color:#b0b0b0">&#x2715;</div>
<div class="t" style="left:1683px;top:153px;font-size:13px">Add Study</div>
<div class="t" style="left:1750px;top:150px;font-size:14px;color:#b0b0b0">&#x2715;</div>
<svg style="left:1889px;top:157px" width="8" height="5" viewBox="0 0 8 5"><path d="M0,0 H8 L4,4z" fill="#c5ccd6"/></svg>
<svg style="left:1903px;top:153px" width="9" height="11" viewBox="0 0 9 11"><rect x="2" y="0" width="5" height="6" fill="#c5ccd6"/><rect x="0" y="6" width="9" height="1.5" fill="#c5ccd6"/><rect x="4" y="7" width="1.3" height="4" fill="#c5ccd6"/></svg>
<svg style="left:1568px;top:178px" width="16" height="16" viewBox="0 0 16 16"><circle cx="7.5" cy="7.5" r="7" fill="none" stroke="#4672b0" stroke-width="1.2"/><ellipse cx="7.5" cy="7.5" rx="3" ry="7" fill="none" stroke="#4672b0"/><path d="M0.5,7.5 H14.5 M2,4 H13 M2,11 H13 M7.5,0.5 V14.5" stroke="#4672b0"/></svg>
<div class="t" style="left:1587px;top:179px">Add to Global Materials</div>
<svg style="left:1722px;top:180px" width="11" height="11" viewBox="0 0 11 11"><path d="M4,0 H7 V4 H11 V7 H7 V11 H4 V7 H0 V4 H4z" fill="#3e76b8"/></svg>
<div class="t" style="left:1739px;top:179px">Add to Component</div>
<svg style="left:1850px;top:184px" width="7" height="4" viewBox="0 0 7 4"><path d="M0,0 H7 L3.5,4z" fill="#111"/></svg>
<div class="a" style="left:1565px;top:201px;width:281px;height:19px;background:#fff;border:1px solid #c8c8c8"></div>
<div class="a" style="left:1851px;top:200px;width:62px;height:21px;background:linear-gradient(#f4f4f4,#e2e2e2);border:1px solid #acacac;border-radius:2px"></div>
<div class="t" style="left:1864px;top:203px;font-size:12.5px">Search</div>
<div class="a" style="left:1566px;top:224px;width:346px;height:599px;background:#fff;border:1px solid #cfd0d3"></div>
<div class="a" style="left:1567px;top:531px;width:344px;height:18px;background:#dadbde"></div>
<svg style="left:1574px;top:229px" width="6" height="9" viewBox="0 0 6 9"><path d="M0.5,0.5 L5,4.5 L0.5,8.5z" fill="#fff" stroke="#8d8d8d"/></svg>
<svg style="left:1587px;top:226px" width="16" height="16" viewBox="0 0 16 16"><rect x="5" y="1" width="4" height="4" fill="#f9a912"/><rect x="0" y="4" width="4" height="4" fill="#f9a912"/><rect x="5" y="6.1" width="4" height="4" fill="#f48b19"/><rect x="10" y="4" width="4" height="4" fill="#f48b19"/><rect x="0" y="9" width="4" height="4" fill="#f48b19"/><rect x="10" y="9" width="4" height="4" fill="#cf7014"/><rect x="5" y="11.1" width="4" height="4" fill="#cf7014"/><path d="M0,12 L4,9 V11 H10 V13 H4 V15z" fill="#e0604a"/></svg>
<div class="t" style="left:1609px;top:227px">Recent Materials</div>
<svg style="left:1574px;top:247px" width="6" height="9" viewBox="0 0 6 9"><path d="M0.5,0.5 L5,4.5 L0.5,8.5z" fill="#fff" stroke="#8d8d8d"/></svg>
<svg style="left:1587px;top:244px" width="16" height="16" viewBox="0 0 16 16"><rect x="0" y="0" width="14" height="14" fill="#4f86c6"/><rect x="1.5" y="1.5" width="2.3" height="11" fill="#4fc3f7"/><rect x="4.5" y="1.5" width="2.3" height="11" fill="#f39a1f"/><rect x="7.5" y="1.5" width="2.3" height="11" fill="#4caf50"/><rect x="10.5" y="1.5" width="2.3" height="11" fill="#e91e63"/></svg>
<div class="t" style="left:1609px;top:245px">Material Library</div>
<svg style="left:1574px;top:265px" width="6" height="9" viewBox="0 0 6 9"><path d="M0.5,0.5 L5,4.5 L0.5,8.5z" fill="#fff" stroke="#8d8d8d"/></svg>
<svg style="left:1587px;top:262px" width="16" height="16" viewBox="0 0 16 16"><rect x="0.5" y="3.5" width="15" height="11" rx="3" fill="#1a2f9a"/><rect x="2.5" y="4.5" width="12" height="9" rx="2" fill="#3a8be0"/><rect x="4" y="5" width="4" height="8" fill="#f5e03a"/><path d="M8,6 L13,5 V9 L8,12z" fill="#7fd0f0"/></svg>
<div class="t" style="left:1609px;top:263px">Built-In</div>
<svg style="left:1574px;top:283px" width="6" height="9" viewBox="0 0 6 9"><path d="M0.5,0.5 L5,4.5 L0.5,8.5z" fill="#fff" stroke="#8d8d8d"/></svg>
<svg style="left:1587px;top:280px" width="16" height="16" viewBox="0 0 16 16"><rect x="2" y="1" width="3.3" height="14" fill="#d8ebf8"/><rect x="5.3" y="1" width="3.3" height="14" fill="#fde3c4"/><rect x="8.6" y="1" width="3.3" height="14" fill="#e0f2d2"/><rect x="11.9" y="1" width="3.3" height="14" fill="#f9d3e6"/><path d="M1,0 L9,4 L7,6 L13,9 L10,10 L15,16 L6,11 L9,10 L3,6 L6,5z" fill="#4a80c0"/></svg>
<div class="t" style="left:1609px;top:281px">AC/DC</div>
<svg style="left:1574px;top:301px" width="6" height="9" viewBox="0 0 6 9"><path d="M0.5,0.5 L5,4.5 L0.5,8.5z" fill="#fff" stroke="#8d8d8d"/></svg>
<svg style="left:1587px;top:298px" width="16" height="16" viewBox="0 0 16 16"><rect x="2" y="1" width="3.3" height="14" fill="#d8ebf8"/><rect x="5.3" y="1" width="3.3" height="14" fill="#fde3c4"/><rect x="8.6" y="1" width="3.3" height="14" fill="#e0f2d2"/><rect x="11.9" y="1" width="3.3" height="14" fill="#f9d3e6"/><rect x="1.5" y="5.5" width="14" height="6" rx="1.5" fill="#e2e2e2" stroke="#777"/><rect x="0" y="7" width="1.5" height="3" fill="#777"/><rect x="3.5" y="7" width="1.2" height="3" fill="#e0195a"/><rect x="12.5" y="7" width="1.2" height="3" fill="#3e76b8"/></svg>
<div class="t" style="left:1609px;top:299px">Batteries and Fuel Cells</div>
<svg style="left:1573px;top:320px" width="6" height="6" viewBox="0 0 6 6"><path d="M6,0 V6 H0z" fill="#222"/></svg>
<svg style="left:1587px;top:316px" width="16" height="16" viewBox="0 0 16 16"><rect x="1" y="1" width="13" height="13" rx="2" fill="#4f86c6"/><path d="M3,12 L9,2 L13,12z" fill="#f2c21a"/><path d="M7,6 L9,2 L10,6z" fill="#f07a1a"/><path d="M3,11 H13 V13 H3z" fill="#3cb3d9"/></svg>
<div class="t" style="left:1609px;top:317px">Bioheat</div>
<svg style="left:1608px;top:334px" width="16" height="16" viewBox="0 0 16 16"><rect x="5" y="1" width="4" height="4" fill="#f9a912"/><rect x="0" y="4" width="4" height="4" fill="#f9a912"/><rect x="5" y="6.1" width="4" height="4" fill="#f48b19"/><rect x="10" y="4" width="4" height="4" fill="#f48b19"/><rect x="0" y="9" width="4" height="4" fill="#f48b19"/><rect x="10" y="9" width="4" height="4" fill="#cf7014"/><rect x="5" y="11.1" width="4" height="4" fill="#cf7014"/></svg>
<div class="t" style="left:1629px;top:335px">Bone</div>
<svg style="left:1608px;top:352px" width="16" height="16" viewBox="0 0 16 16"><rect x="5" y="1" width="4" height="4" fill="#f9a912"/><rect x="0" y="4" width="4" height="4" fill="#f9a912"/><rect x="5" y="6.1" width="4" height="4" fill="#f48b19"/><rect x="10" y="4" width="4" height="4" fill="#f48b19"/><rect x="0" y="9" width="4" height="4" fill="#f48b19"/><rect x="10" y="9" width="4" height="4" fill="#cf7014"/><rect x="5" y="11.1" width="4" height="4" fill="#cf7014"/></svg>
<div class="t" style="left:1629px;top:353px">Fat</div>
<svg style="left:1608px;top:370px" width="16" height="16" viewBox="0 0 16 16"><rect x="5" y="1" width="4" height="4" fill="#f9a912"/><rect x="0" y="4" width="4" height="4" fill="#f9a912"/><rect x="5" y="6.1" width="4" height="4" fill="#f48b19"/><rect x="10" y="4" width="4" height="4" fill="#f48b19"/><rect x="0" y="9" width="4" height="4" fill="#f48b19"/><rect x="10" y="9" width="4" height="4" fill="#cf7014"/><rect x="5" y="11.1" width="4" height="4" fill="#cf7014"/></svg>
<div class="t" style="left:1629px;top:371px">Liver (human)</div>
<svg style="left:1608px;top:388px" width="16" height="16" viewBox="0 0 16 16"><rect x="5" y="1" width="4" height="4" fill="#f9a912"/><rect x="0" y="4" width="4" height="4" fill="#f9a912"/><rect x="5" y="6.1" width="4" height="4" fill="#f48b19"/><rect x="10" y="4" width="4" height="4" fill="#f48b19"/><rect x="0" y="9" width="4" height="4" fill="#f48b19"/><rect x="10" y="9" width="4" height="4" fill="#cf7014"/><rect x="5" y="11.1" width="4" height="4" fill="#cf7014"/></svg>
<div class="t" style="left:1629px;top:389px">Liver (porcine)</div>
<svg style="left:1608px;top:406px" width="16" height="16" viewBox="0 0 16 16"><rect x="5" y="1" width="4" height="4" fill="#f9a912"/><rect x="0" y="4" width="4" height="4" fill="#f9a912"/><rect x="5" y="6.1" width="4" height="4" fill="#f48b19"/><rect x="10" y="4" width="4" height="4" fill="#f48b19"/><rect x="0" y="9" width="4" height="4" fill="#f48b19"/><rect x="10" y="9" width="4" height="4" fill="#cf7014"/><rect x="5" y="11.1" width="4" height="4" fill="#cf7014"/></svg>
<div class="t" style="left:1629px;top:407px">Lung</div>
<svg style="left:1608px;top:424px" width="16" height="16" viewBox="0 0 16 16"><rect x="5" y="1" width="4" height="4" fill="#f9a912"/><rect x="0" y="4" width="4" height="4" fill="#f9a912"/><rect x="5" y="6.1" width="4" height="4" fill="#f48b19"/><rect x="10" y="4" width="4" height="4" fill="#f48b19"/><rect x="0" y="9" width="4" height="4" fill="#f48b19"/><rect x="10" y="9" width="4" height="4" fill="#cf7014"/><rect x="5" y="11.1" width="4" height="4" fill="#cf7014"/></svg>
<div class="t" style="left:1629px;top:425px">Muscle</div>
<svg style="left:1608px;top:442px" width="16" height="16" viewBox="0 0 16 16"><rect x="5" y="1" width="4" height="4" fill="#f9a912"/><rect x="0" y="4" width="4" height="4" fill="#f9a912"/><rect x="5" y="6.1" width="4" height="4" fill="#f48b19"/><rect x="10" y="4" width="4" height="4" fill="#f48b19"/><rect x="0" y="9" width="4" height="4" fill="#f48b19"/><rect x="10" y="9" width="4" height="4" fill="#cf7014"/><rect x="5" y="11.1" width="4" height="4" fill="#cf7014"/></svg>
<div class="t" style="left:1629px;top:443px">Myocardium (human)</div>
<svg style="left:1608px;top:460px" width="16" height="16" viewBox="0 0 16 16"><rect x="5" y="1" width="4" height="4" fill="#f9a912"/><rect x="0" y="4" width="4" height="4" fill="#f9a912"/><rect x="5" y="6.1" width="4" height="4" fill="#f48b19"/><rect x="10" y="4" width="4" height="4" fill="#f48b19"/><rect x="0" y="9" width="4" height="4" fill="#f48b19"/><rect x="10" y="9" width="4" height="4" fill="#cf7014"/><rect x="5" y="11.1" width="4" height="4" fill="#cf7014"/></svg>
<div class="t" style="left:1629px;top:461px">Myocardium (porcine)</div>
<svg style="left:1608px;top:478px" width="16" height="16" viewBox="0 0 16 16"><rect x="5" y="1" width="4" height="4" fill="#f9a912"/><rect x="0" y="4" width="4" height="4" fill="#f9a912"/><rect x="5" y="6.1" width="4" height="4" fill="#f48b19"/><rect x="10" y="4" width="4" height="4" fill="#f48b19"/><rect x="0" y="9" width="4" height="4" fill="#f48b19"/><rect x="10" y="9" width="4" height="4" fill="#cf7014"/><rect x="5" y="11.1" width="4" height="4" fill="#cf7014"/></svg>
<div class="t" style="left:1629px;top:479px">Prostate</div>
<svg style="left:1608px;top:496px" width="16" height="16" viewBox="0 0 16 16"><rect x="5" y="1" width="4" height="4" fill="#f9a912"/><rect x="0" y="4" width="4" height="4" fill="#f9a912"/><rect x="5" y="6.1" width="4" height="4" fill="#f48b19"/><rect x="10" y="4" width="4" height="4" fill="#f48b19"/><rect x="0" y="9" width="4" height="4" fill="#f48b19"/><rect x="10" y="9" width="4" height="4" fill="#cf7014"/><rect x="5" y="11.1" width="4" height="4" fill="#cf7014"/></svg>
<div class="t" style="left:1629px;top:497px">Renal cortex</div>
<svg style="left:1608px;top:514px" width="16" height="16" viewBox="0 0 16 16"><rect x="5" y="1" width="4" height="4" fill="#f9a912"/><rect x="0" y="4" width="4" height="4" fill="#f9a912"/><rect x="5" y="6.1" width="4" height="4" fill="#f48b19"/><rect x="10" y="4" width="4" height="4" fill="#f48b19"/><rect x="0" y="9" width="4" height="4" fill="#f48b19"/><rect x="10" y="9" width="4" height="4" fill="#cf7014"/><rect x="5" y="11.1" width="4" height="4" fill="#cf7014"/></svg>
<div class="t" style="left:1629px;top:515px">Renal medulla</div>
<svg style="left:1608px;top:532px" width="16" height="16" viewBox="0 0 16 16"><rect x="5" y="1" width="4" height="4" fill="#f9a912"/><rect x="0" y="4" width="4" height="4" fill="#f9a912"/><rect x="5" y="6.1" width="4" height="4" fill="#f48b19"/><rect x="10" y="4" width="4" height="4" fill="#f48b19"/><rect x="0" y="9" width="4" height="4" fill="#f48b19"/><rect x="10" y="9" width="4" height="4" fill="#cf7014"/><rect x="5" y="11.1" width="4" height="4" fill="#cf7014"/></svg>
<div class="t" style="left:1629px;top:533px">Skin</div>
<svg style="left:1608px;top:550px" width="16" height="16" viewBox="0 0 16 16"><rect x="5" y="1" width="4" height="4" fill="#f9a912"/><rect x="0" y="4" width="4" height="4" fill="#f9a912"/><rect x="5" y="6.1" width="4" height="4" fill="#f48b19"/><rect x="10" y="4" width="4" height="4" fill="#f48b19"/><rect x="0" y="9" width="4" height="4" fill="#f48b19"/><rect x="10" y="9" width="4" height="4" fill="#cf7014"/><rect x="5" y="11.1" width="4" height="4" fill="#cf7014"/></svg>
<div class="t" style="left:1629px;top:551px">Spleen</div>
<svg style="left:1574px;top:571px" width="6" height="9" viewBox="0 0 6 9"><path d="M0.5,0.5 L5,4.5 L0.5,8.5z" fill="#fff" stroke="#8d8d8d"/></svg>
<svg style="left:1587px;top:568px" width="16" height="16" viewBox="0 0 16 16"><path d="M1,3 C0,7 2,11 1,15" fill="none" stroke="#f39a1f"/><path d="M2.5,5 L5,3 H15 V15 H2.5z" fill="#c8102e"/><path d="M4,9 L8.5,5.5 L13,9 L8.5,12.5z" fill="none" stroke="#f7b030" stroke-width="1.1"/><path d="M13,0 C12,2 11,3 12,4 C13,5 14,4 14,3z" fill="#e0609a"/></svg>
<div class="t" style="left:1609px;top:569px">Building</div>
<svg style="left:1574px;top:589px" width="6" height="9" viewBox="0 0 6 9"><path d="M0.5,0.5 L5,4.5 L0.5,8.5z" fill="#fff" stroke="#8d8d8d"/></svg>
<svg style="left:1587px;top:586px" width="16" height="16" viewBox="0 0 16 16"><rect x="2" y="1" width="3.3" height="14" fill="#d8ebf8"/><rect x="5.3" y="1" width="3.3" height="14" fill="#fde3c4"/><rect x="8.6" y="1" width="3.3" height="14" fill="#e0f2d2"/><rect x="11.9" y="1" width="3.3" height="14" fill="#f9d3e6"/><text x="0" y="13" font-family="Liberation Sans" font-size="12" fill="#4a80c0">&#916;</text><text x="9" y="13" font-family="Liberation Sans" font-size="10" fill="#4a80c0">u</text></svg>
<div class="t" style="left:1609px;top:587px">Equilibrium Discharge</div>
<svg style="left:1574px;top:607px" width="6" height="9" viewBox="0 0 6 9"><path d="M0.5,0.5 L5,4.5 L0.5,8.5z" fill="#fff" stroke="#8d8d8d"/></svg>
<svg style="left:1587px;top:604px" width="16" height="16" viewBox="0 0 16 16"><rect x="2" y="1" width="3.3" height="14" fill="#d8ebf8"/><rect x="5.3" y="1" width="3.3" height="14" fill="#fde3c4"/><rect x="8.6" y="1" width="3.3" height="14" fill="#e0f2d2"/><rect x="11.9" y="1" width="3.3" height="14" fill="#f9d3e6"/><path d="M3,6 C1,10 1,12 3,12 C5,12 5,10 3,6z" fill="#3e76b8"/><path d="M7,5 C9,3 11,7 15,5 M7,9 C9,7 11,11 15,9 M7,13 C9,11 11,15 15,13" fill="none" stroke="#4a80c0" stroke-width="1.2"/></svg>
<div class="t" style="left:1609px;top:605px">Liquids and Gases</div>
<svg style="left:1574px;top:625px" width="6" height="9" viewBox="0 0 6 9"><path d="M0.5,0.5 L5,4.5 L0.5,8.5z" fill="#fff" stroke="#8d8d8d"/></svg>
<svg style="left:1587px;top:622px" width="16" height="16" viewBox="0 0 16 16"><rect x="2" y="1" width="3.3" height="14" fill="#d8ebf8"/><rect x="5.3" y="1" width="3.3" height="14" fill="#fde3c4"/><rect x="8.6" y="1" width="3.3" height="14" fill="#e0f2d2"/><rect x="11.9" y="1" width="3.3" height="14" fill="#f9d3e6"/><text x="3.5" y="13" font-family="Liberation Sans" font-weight="bold" font-size="13" fill="#4a80c0">&#956;</text></svg>
<div class="t" style="left:1609px;top:623px">MEMS</div>
<svg style="left:1574px;top:643px" width="6" height="9" viewBox="0 0 6 9"><path d="M0.5,0.5 L5,4.5 L0.5,8.5z" fill="#fff" stroke="#8d8d8d"/></svg>
<svg style="left:1587px;top:640px" width="16" height="16" viewBox="0 0 16 16"><rect x="2" y="1" width="3.3" height="14" fill="#d8ebf8"/><rect x="5.3" y="1" width="3.3" height="14" fill="#fde3c4"/><rect x="8.6" y="1" width="3.3" height="14" fill="#e0f2d2"/><rect x="11.9" y="1" width="3.3" height="14" fill="#f9d3e6"/><path d="M3,14 V8 A5,5 0 0 1 13,8 V14 H10 V8 A2,2 0 0 0 6,8 V14z" fill="#c8102e"/><rect x="3" y="12" width="3" height="2" fill="#999"/><rect x="10" y="12" width="3" height="2" fill="#999"/></svg>
<div class="t" style="left:1609px;top:641px">Nonlinear Magnetic</div>
<svg style="left:1574px;top:661px" width="6" height="9" viewBox="0 0 6 9"><path d="M0.5,0.5 L5,4.5 L0.5,8.5z" fill="#fff" stroke="#8d8d8d"/></svg>
<svg style="left:1587px;top:658px" width="16" height="16" viewBox="0 0 16 16"><rect x="2" y="1" width="3.3" height="14" fill="#d8ebf8"/><rect x="5.3" y="1" width="3.3" height="14" fill="#fde3c4"/><rect x="8.6" y="1" width="3.3" height="14" fill="#e0f2d2"/><rect x="11.9" y="1" width="3.3" height="14" fill="#f9d3e6"/><path d="M0.5,3 V13 M2.5,3 V13" stroke="#4a80c0"/><ellipse cx="8" cy="8" rx="2.5" ry="7" fill="none" stroke="#4a80c0" stroke-width="1.3"/><path d="M12,5 C14,7 14,9 12,11 M14,4 C16,7 16,9 14,12" fill="none" stroke="#4a80c0"/></svg>
<div class="t" style="left:1609px;top:659px">Optical</div>
<svg style="left:1574px;top:679px" width="6" height="9" viewBox="0 0 6 9"><path d="M0.5,0.5 L5,4.5 L0.5,8.5z" fill="#fff" stroke="#8d8d8d"/></svg>
<svg style="left:1587px;top:676px" width="16" height="16" viewBox="0 0 16 16"><rect x="2" y="1" width="3.3" height="14" fill="#d8ebf8"/><rect x="5.3" y="1" width="3.3" height="14" fill="#fde3c4"/><rect x="8.6" y="1" width="3.3" height="14" fill="#e0f2d2"/><rect x="11.9" y="1" width="3.3" height="14" fill="#f9d3e6"/><path d="M4,1 L12,6 L9,7 L15,12 L6,7 L9,6z" fill="#4a80c0"/><path d="M2,10 C3,12 3,14 2,16 M5,10 C6,12 6,14 5,16 M8,11 C9,13 9,14 8,16" fill="none" stroke="#4a80c0"/></svg>
<div class="t" style="left:1609px;top:677px">Piezoelectric</div>
<svg style="left:1574px;top:697px" width="6" height="9" viewBox="0 0 6 9"><path d="M0.5,0.5 L5,4.5 L0.5,8.5z" fill="#fff" stroke="#8d8d8d"/></svg>
<svg style="left:1587px;top:694px" width="16" height="16" viewBox="0 0 16 16"><rect x="2" y="1" width="3.3" height="14" fill="#d8ebf8"/><rect x="5.3" y="1" width="3.3" height="14" fill="#fde3c4"/><rect x="8.6" y="1" width="3.3" height="14" fill="#e0f2d2"/><rect x="11.9" y="1" width="3.3" height="14" fill="#f9d3e6"/><path d="M1,0 L12,6 L8,7 L15,11 L4,7 L8,6z" fill="#4a80c0"/><path d="M2,13 H15 M2,15 H15" stroke="#888"/></svg>
<div class="t" style="left:1609px;top:695px">Piezoresistivity</div>
<svg style="left:1574px;top:715px" width="6" height="9" viewBox="0 0 6 9"><path d="M0.5,0.5 L5,4.5 L0.5,8.5z" fill="#fff" stroke="#8d8d8d"/></svg>
<svg style="left:1587px;top:712px" width="16" height="16" viewBox="0 0 16 16"><rect x="1.5" y="5.5" width="13" height="9" rx="1" fill="#fff" stroke="#4f86c6"/><path d="M3,1 V5 M5,1 V5 M7,1 V5 M9,1 V5 M11,1 V5 M13,1 V5" stroke="#4f86c6"/><path d="M3,10 C5,8 6,12 8,10 C10,8 11,12 13,10" fill="none" stroke="#4f86c6"/></svg>
<div class="t" style="left:1609px;top:713px">RF</div>
<svg style="left:1574px;top:733px" width="6" height="9" viewBox="0 0 6 9"><path d="M0.5,0.5 L5,4.5 L0.5,8.5z" fill="#fff" stroke="#8d8d8d"/></svg>
<svg style="left:1587px;top:730px" width="16" height="16" viewBox="0 0 16 16"><rect x="2" y="1" width="3.3" height="14" fill="#d8ebf8"/><rect x="5.3" y="1" width="3.3" height="14" fill="#fde3c4"/><rect x="8.6" y="1" width="3.3" height="14" fill="#e0f2d2"/><rect x="11.9" y="1" width="3.3" height="14" fill="#f9d3e6"/><rect x="3.5" y="3.5" width="10" height="9" fill="none" stroke="#4a80c0" stroke-width="1.2"/><path d="M5,1 V3 M8.5,1 V3 M12,1 V3 M5,13 V15 M8.5,13 V15 M12,13 V15" stroke="#4a80c0"/></svg>
<div class="t" style="left:1609px;top:731px">Semiconductors</div>
<svg style="left:1574px;top:751px" width="6" height="9" viewBox="0 0 6 9"><path d="M0.5,0.5 L5,4.5 L0.5,8.5z" fill="#fff" stroke="#8d8d8d"/></svg>
<svg style="left:1587px;top:748px" width="16" height="16" viewBox="0 0 16 16"><rect x="2" y="1" width="3.3" height="14" fill="#d8ebf8"/><rect x="5.3" y="1" width="3.3" height="14" fill="#fde3c4"/><rect x="8.6" y="1" width="3.3" height="14" fill="#e0f2d2"/><rect x="11.9" y="1" width="3.3" height="14" fill="#f9d3e6"/><path d="M0,3 L9,7 L6,8 L12,13 L3,8 L6,7z" fill="#3e76b8"/><path d="M11,1 C9,4 13,6 11,9 C10,11 12,13 11,15 M14,1 C12,4 16,6 14,9 C13,11 15,13 14,15" fill="none" stroke="#f39a1f" stroke-width="1.2"/></svg>
<div class="t" style="left:1609px;top:749px">Thermoelectric</div>
<svg style="left:1574px;top:769px" width="6" height="9" viewBox="0 0 6 9"><path d="M0.5,0.5 L5,4.5 L0.5,8.5z" fill="#fff" stroke="#8d8d8d"/></svg>
<svg style="left:1587px;top:766px" width="16" height="16" viewBox="0 0 16 16"><rect x="4" y="0" width="12" height="14" fill="#4f86c6"/><rect x="5.5" y="1.5" width="2" height="11" fill="#4fc3f7"/><rect x="8.5" y="1.5" width="2" height="11" fill="#f39a1f"/><rect x="11.5" y="1.5" width="2" height="11" fill="#4caf50"/><circle cx="3" cy="9" r="2" fill="#fff" stroke="#555"/><path d="M0,15 C0,11 6,11 6,15z" fill="#fff" stroke="#555"/></svg>
<div class="t" style="left:1609px;top:767px">User-Defined Library</div><div class="a" style="left:892px;top:865px;width:1024px;height:1px;background:#d4d4d4"></div>
<div class="a" style="left:896px;top:842px;width:87px;height:23px;background:#ebebeb"></div>
<div class="a" style="left:991px;top:842px;width:60px;height:23px;background:#ebebeb"></div>
<div class="a" style="left:1059px;top:842px;width:30px;height:23px;background:#ebebeb"></div>
<div class="a" style="left:1097px;top:842px;width:62px;height:24px;border:1px solid #d4d4d4;border-bottom:none;background:#f9fafe"></div>
<div class="t" style="left:900px;top:848px;font-size:13px">Messages</div>
<div class="t" style="left:966px;top:845px;font-size:14px;color:#b0b0b0">&#x2715;</div>
<div class="t" style="left:995px;top:848px;font-size:13px">Progress</div>
<div class="t" style="left:1063px;top:848px;font-size:13px">Log</div>
<div class="t" style="left:1102px;top:849px;font-size:13px;color:#2b5797">Table</div>
<div class="t" style="left:1140px;top:845px;font-size:14px;color:#b0b0b0">&#x2715;</div>
<svg style="left:1889px;top:852px" width="8" height="5" viewBox="0 0 8 5"><path d="M0,0 H8 L4,4z" fill="#c5ccd6"/></svg>
<svg style="left:1903px;top:848px" width="9" height="11" viewBox="0 0 9 11"><rect x="2" y="0" width="5" height="6" fill="#c5ccd6"/><rect x="0" y="6" width="9" height="1.5" fill="#c5ccd6"/><rect x="4" y="7" width="1.3" height="4" fill="#c5ccd6"/></svg>
<svg style="left:902px;top:873px" width="16" height="16" viewBox="0 0 16 16"><rect x="0.5" y="0.5" width="15" height="15" rx="1" fill="#e6e6e6" stroke="#b8b8b8"/><circle cx="4" cy="10" r="1.5" fill="#b8b8b8"/><circle cx="8" cy="10" r="1.5" fill="#b8b8b8"/><circle cx="12" cy="10" r="1.5" fill="#b8b8b8"/><path d="M4,3 V13 M8,3 V13 M12,3 V13" stroke="#b8b8b8"/></svg>
<div class="a" style="left:928px;top:873px;width:1px;height:17px;background:#c8c8c8"></div>
<div class="a" style="left:1064px;top:873px;width:1px;height:17px;background:#c8c8c8"></div>
<div class="a" style="left:1129px;top:873px;width:1px;height:17px;background:#c8c8c8"></div>
<svg style="left:941px;top:873px" width="18" height="17" viewBox="0 0 18 17"><text x="9" y="7" text-anchor="middle" font-family="Liberation Sans" font-size="7" fill="#aaa">0.85</text><text x="9" y="15" text-anchor="middle" font-family="Liberation Sans" font-size="7" fill="#aaa">e-12</text></svg>
<svg style="left:965px;top:872px" width="18" height="18" viewBox="0 0 18 18"><rect x="0.5" y="0.5" width="17" height="17" rx="2" fill="#8fbbe8" stroke="#3e6fb0"/><rect x="2" y="2" width="14" height="7" fill="#b9d6f5"/><text x="9" y="12" text-anchor="middle" font-family="Liberation Sans" font-size="6" fill="#fff">AUTO</text></svg>
<svg style="left:989px;top:873px" width="18" height="17" viewBox="0 0 18 17"><text x="9" y="7" text-anchor="middle" font-family="Liberation Sans" font-size="7" fill="#aaa">0.5</text><text x="9" y="15" text-anchor="middle" font-family="Liberation Sans" font-size="7" fill="#aaa">e-1</text></svg>
<svg style="left:1012px;top:873px" width="18" height="17" viewBox="0 0 18 17"><text x="9" y="7" text-anchor="middle" font-family="Liberation Sans" font-size="7" fill="#aaa">850</text><text x="9" y="15" text-anchor="middle" font-family="Liberation Sans" font-size="7" fill="#aaa">e-3</text></svg>
<svg style="left:1037px;top:873px" width="18" height="17" viewBox="0 0 18 17"><text x="9" y="11" text-anchor="middle" font-family="Liberation Sans" font-size="7" fill="#aaa">0.85</text></svg>
<svg style="left:1077px;top:872px" width="18" height="18" viewBox="0 0 18 18"><rect x="0.5" y="0.5" width="17" height="17" rx="2" fill="#cfe2f7" stroke="#3e6fb0"/><rect x="3" y="4" width="12" height="10" fill="#fff" stroke="#3e76b8"/><path d="M3,7 H15 M3,10 H15 M6,4 V14 M9,4 V14 M12,4 V14" stroke="#3e76b8" stroke-width="0.8"/></svg>
<svg style="left:1101px;top:873px" width="16" height="16" viewBox="0 0 16 16"><circle cx="8" cy="8" r="7" fill="none" stroke="#b8b8b8"/><circle cx="8" cy="8" r="4" fill="none" stroke="#b8b8b8"/><path d="M1,8 H15 M8,1 V15" stroke="#b8b8b8"/></svg>
<svg style="left:1144px;top:872px" width="12" height="17" viewBox="0 0 12 17"><path d="M1,0 L7,10" stroke="#b8b8b8" stroke-width="1.3"/><path d="M5,9 L11,16 L7,17z" fill="#b8b8b8"/></svg>
<svg style="left:1168px;top:872px" width="11" height="17" viewBox="0 0 11 17"><rect x="0" y="1" width="11" height="2" fill="#b8b8b8"/><path d="M1,4 H10 L9,17 H2z" fill="none" stroke="#b8b8b8"/><path d="M4,6 V15 M7,6 V15" stroke="#b8b8b8"/></svg>
<svg style="left:1191px;top:873px" width="16" height="16" viewBox="0 0 16 16"><rect x="2.5" y="3.5" width="12" height="10" fill="#fff" stroke="#b8b8b8"/><path d="M2.5,6.5 H14.5 M2.5,9.5 H14.5 M7.5,3.5 V13.5 M0,0 V15 H16" stroke="#b8b8b8" fill="none"/></svg>
<svg style="left:1215px;top:873px" width="15" height="15" viewBox="0 0 15 15"><rect x="0" y="0" width="15" height="15" fill="#a3a3a3"/></svg>
<svg style="left:1237px;top:873px" width="17" height="16" viewBox="0 0 17 16"><rect x="0.5" y="0.5" width="10" height="12" fill="#fff" stroke="#b8b8b8"/><rect x="5.5" y="5.5" width="11" height="10" fill="#fff" stroke="#b8b8b8"/><path d="M7,9 H15 M7,12 H15 M11,6 V15" stroke="#b8b8b8"/></svg>
<svg style="left:1261px;top:873px" width="17" height="16" viewBox="0 0 17 16"><rect x="0.5" y="2.5" width="13" height="12" fill="#fff" stroke="#b8b8b8"/><path d="M0.5,5.5 H13.5" stroke="#b8b8b8"/><path d="M6,10 H16 M14,8 L16,10 L14,12" stroke="#b8b8b8" fill="none" stroke-width="1.3"/></svg>
<svg style="left:1286px;top:873px" width="15" height="15" viewBox="0 0 15 15"><rect x="0.5" y="0.5" width="14" height="14" fill="#fff" stroke="#a8226a"/><path d="M0.5,4 H14.5 M0.5,7.5 H14.5 M0.5,11 H14.5 M5,0.5 V14.5 M10,0.5 V14.5" stroke="#a8226a" stroke-width="1.2"/><rect x="0" y="0" width="15" height="3.5" fill="#a8226a"/></svg>
<svg style="left:1310px;top:879px" width="7" height="4" viewBox="0 0 7 4"><path d="M0,0 H7 L3.5,4z" fill="#111"/></svg>
<div class="t" style="left:1240px;top:1022px;font-size:12px;letter-spacing:-0.6px">1.5 GB | 1.82 GB</div>
</body></html>
